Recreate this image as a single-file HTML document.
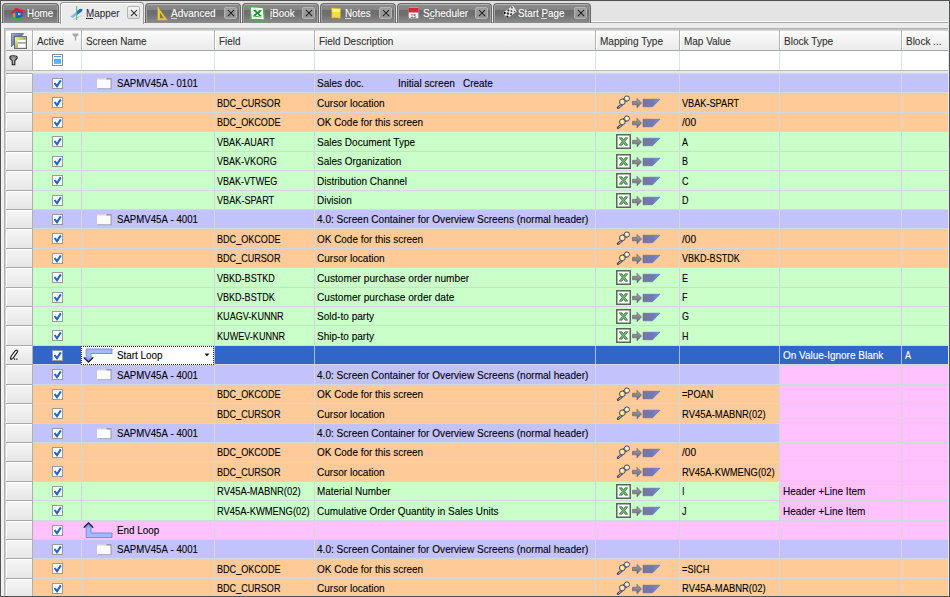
<!DOCTYPE html><html><head><meta charset="utf-8"><style>
*{margin:0;padding:0;box-sizing:border-box}
html,body{width:950px;height:597px;overflow:hidden}
body{position:relative;background:#e4e4e4;font-family:"Liberation Sans", sans-serif;font-size:10px}
.a{position:absolute}
.t{position:absolute;white-space:nowrap;transform-origin:0 0;line-height:12px;font-size:10px;-webkit-text-stroke:0.1px currentColor}
</style></head><body>
<div class="a" style="left:1px;top:1px;width:948px;height:1px;background:#e0e0e0"></div>
<div class="a" style="left:1px;top:21px;width:947px;height:1px;background:#f8f8f8"></div>
<div class="a" style="left:1px;top:22px;width:947px;height:1px;background:#a8a8a8"></div>
<div class="a" style="left:1px;top:23px;width:947px;height:573px;background:#ebebeb"></div>
<div class="a" style="left:1px;top:23px;width:3px;height:573px;background:#f0f0f0"></div>
<div class="a" style="left:2px;top:3px;width:57px;height:20px;background:linear-gradient(#b4b4b4 0,#b4b4b4 1px,#8c8c8c 1px,#838383 6px,#6c6c6c 6px,#707070 11px,#8c8c8c 19px);border:1px solid #6a6a6a;border-bottom:none;border-radius:4px 4px 0 0;box-shadow:inset 1px 0 0 #a0a0a0,inset -1px 0 0 #a0a0a0"></div>
<div class="a" style="left:60px;top:2px;width:84px;height:22px;background:#ebebeb;border:1px solid #9a9a9a;border-bottom:none;border-radius:3px 3px 0 0;box-shadow:inset 1px 1px 0 #fff"></div>
<div class="a" style="left:145px;top:3px;width:96px;height:20px;background:linear-gradient(#b4b4b4 0,#b4b4b4 1px,#8c8c8c 1px,#838383 6px,#6c6c6c 6px,#707070 11px,#8c8c8c 19px);border:1px solid #6a6a6a;border-bottom:none;border-radius:4px 4px 0 0;box-shadow:inset 1px 0 0 #a0a0a0,inset -1px 0 0 #a0a0a0"></div>
<div class="a" style="left:242px;top:3px;width:77px;height:20px;background:linear-gradient(#b4b4b4 0,#b4b4b4 1px,#8c8c8c 1px,#838383 6px,#6c6c6c 6px,#707070 11px,#8c8c8c 19px);border:1px solid #6a6a6a;border-bottom:none;border-radius:4px 4px 0 0;box-shadow:inset 1px 0 0 #a0a0a0,inset -1px 0 0 #a0a0a0"></div>
<div class="a" style="left:320px;top:3px;width:76px;height:20px;background:linear-gradient(#b4b4b4 0,#b4b4b4 1px,#8c8c8c 1px,#838383 6px,#6c6c6c 6px,#707070 11px,#8c8c8c 19px);border:1px solid #6a6a6a;border-bottom:none;border-radius:4px 4px 0 0;box-shadow:inset 1px 0 0 #a0a0a0,inset -1px 0 0 #a0a0a0"></div>
<div class="a" style="left:397px;top:3px;width:95px;height:20px;background:linear-gradient(#b4b4b4 0,#b4b4b4 1px,#8c8c8c 1px,#838383 6px,#6c6c6c 6px,#707070 11px,#8c8c8c 19px);border:1px solid #6a6a6a;border-bottom:none;border-radius:4px 4px 0 0;box-shadow:inset 1px 0 0 #a0a0a0,inset -1px 0 0 #a0a0a0"></div>
<div class="a" style="left:493px;top:3px;width:98px;height:20px;background:linear-gradient(#b4b4b4 0,#b4b4b4 1px,#8c8c8c 1px,#838383 6px,#6c6c6c 6px,#707070 11px,#8c8c8c 19px);border:1px solid #6a6a6a;border-bottom:none;border-radius:4px 4px 0 0;box-shadow:inset 1px 0 0 #a0a0a0,inset -1px 0 0 #a0a0a0"></div>
<svg class="a" style="left:10px;top:7px" width="14" height="12" viewBox="0 0 14 12"><path d="M1.5 6 L6.5 2.5 L12.5 5 L12 10.5 L6 11.5 L1.5 10 Z" fill="#2c6ee0"/><path d="M6.5 2.5 L12.5 5 L12 10.5 L6.5 11.3 Z" fill="#1e58c0"/><path d="M0.6 6.3 L6 0.8 L13.6 3.6 L12.6 6.2 L6.4 3.2 L1.8 7.3 Z" fill="#f01820"/><path d="M2.6 6.6 L5.2 6.2 L5.4 10.8 L2.8 10.6 Z" fill="#f08a20"/><path d="M8 6 L10.4 6.3 L10.3 8.3 L8 8 Z" fill="#a8d8ff"/><path d="M0.8 10 Q6 12.6 13.2 9.8 L13 11.2 Q6 12.8 1 11.2 Z" fill="#34b040"/></svg>
<div class="t " style="left:27px;top:7.4px;color:#fff;font-size:11px;transform:scaleX(0.8970);">Home</div>
<div class="a" style="left:33.4px;top:18px;width:5.6px;height:1px;background:#d8d8d8"></div>
<svg class="a" style="left:69px;top:5px" width="15" height="15" viewBox="0 0 15 15"><path d="M1.2 11.8 L8 6.5 L8 9.5 L4 12.8 Z" fill="#78b8ec"/><path d="M8 6 L11 3.8 L13.8 4.2 L12.5 6.8 L8 10 Z" fill="#1a70c8"/><path d="M4.5 14.5 L12.8 10.5" stroke="#c4c4c4" stroke-width="0.9"/><rect x="7.1" y="1" width="1.1" height="14" fill="#50c070"/></svg>
<div class="t " style="left:86px;top:7.4px;color:#303048;font-size:11px;transform:scaleX(0.8998);">Mapper</div>
<div class="a" style="left:86.0px;top:18px;width:7.4px;height:1px;background:#303048"></div>
<div class="a" style="left:127px;top:6px;width:13px;height:13px;border:1px solid #b4b4b4;border-radius:2px;background:linear-gradient(#f4f4f4,#dcdcdc)"></div>
<svg class="a" style="left:130px;top:9px" width="8" height="8"><path d="M1 1 L7 7 M7 1 L1 7" stroke="#111" stroke-width="1.05"/></svg>
<svg class="a" style="left:157px;top:6px" width="12" height="15" viewBox="0 0 12 15"><path d="M1 1 L1 14.2 L10.5 14.2 Z M3 6.8 L3 12.3 L6.9 12.3 Z" fill="#e8c428" fill-rule="evenodd"/><path d="M1 1 L1 14.2" stroke="#f8dc50" stroke-width="0.6"/></svg>
<div class="t " style="left:171px;top:7.4px;color:#fff;font-size:11px;transform:scaleX(0.9105);">Advanced</div>
<div class="a" style="left:171.0px;top:18px;width:5.9px;height:1px;background:#d8d8d8"></div>
<div class="a" style="left:224px;top:7px;width:13px;height:12px;border:1px solid #b4b4b4;border-radius:2px;background:linear-gradient(#a4a4a4,#8c8c8c);box-shadow:inset 0 0 0 1px #9c9c9c"></div>
<svg class="a" style="left:227px;top:9px" width="8" height="8"><path d="M1 1 L7 7 M7 1 L1 7" stroke="#111" stroke-width="1.05"/></svg>
<svg class="a" style="left:249px;top:5px" width="17" height="16" viewBox="0 0 17 16"><path d="M1 1.5 L14.5 2.5 L15.5 15 L2 14.5 Z" fill="#fff" stroke="#58a858" stroke-width="1.6"/><path d="M3.5 11 L12.5 12" stroke="#58a858" stroke-width="1"/><path d="M4 5 L7 5 L8.5 7 L10.5 5 L13 5.5 L10 8.5 L13 11 L10 11 L8.5 9 L6.5 11 L4 10.5 L7 8 Z" fill="#20902c"/></svg>
<div class="t " style="left:270px;top:7.4px;color:#fff;font-size:11px;transform:scaleX(0.8975);">iBook</div>
<div class="a" style="left:270.0px;top:18px;width:2.2px;height:1px;background:#d8d8d8"></div>
<div class="a" style="left:302px;top:7px;width:13px;height:12px;border:1px solid #b4b4b4;border-radius:2px;background:linear-gradient(#a4a4a4,#8c8c8c);box-shadow:inset 0 0 0 1px #9c9c9c"></div>
<svg class="a" style="left:305px;top:9px" width="8" height="8"><path d="M1 1 L7 7 M7 1 L1 7" stroke="#111" stroke-width="1.05"/></svg>
<svg class="a" style="left:330px;top:7px" width="12" height="13" viewBox="0 0 12 13"><path d="M1.5 1 L10.5 1.6 L10.2 11.2 Q6 10.2 1.8 11 Q2.2 6 1.5 1 Z" fill="#f4e038" stroke="#d8b020" stroke-width="0.7"/><path d="M2.3 1.8 L9.7 2.3 L9.6 5 Q6 3.8 2.4 5.2 Z" fill="#fff590"/></svg>
<div class="t " style="left:345px;top:7.4px;color:#fff;font-size:11px;transform:scaleX(0.8964);">Notes</div>
<div class="a" style="left:345.0px;top:18px;width:6.4px;height:1px;background:#d8d8d8"></div>
<div class="a" style="left:379px;top:7px;width:13px;height:12px;border:1px solid #b4b4b4;border-radius:2px;background:linear-gradient(#a4a4a4,#8c8c8c);box-shadow:inset 0 0 0 1px #9c9c9c"></div>
<svg class="a" style="left:382px;top:9px" width="8" height="8"><path d="M1 1 L7 7 M7 1 L1 7" stroke="#111" stroke-width="1.05"/></svg>
<svg class="a" style="left:408px;top:7px" width="11" height="12" viewBox="0 0 11 12"><rect x="0.5" y="0.5" width="10" height="11" fill="#f4f4f4" stroke="#909090" stroke-width="0.6"/><rect x="0.5" y="1" width="10" height="4.5" fill="#d8283a"/><text x="2.5" y="10.5" font-size="5" fill="#444" font-family="Liberation Sans">15</text></svg>
<div class="t " style="left:423px;top:7.4px;color:#fff;font-size:11px;transform:scaleX(0.9107);">Scheduler</div>
<div class="a" style="left:428.9px;top:18px;width:5.0px;height:1px;background:#d8d8d8"></div>
<div class="a" style="left:475px;top:7px;width:13px;height:12px;border:1px solid #b4b4b4;border-radius:2px;background:linear-gradient(#a4a4a4,#8c8c8c);box-shadow:inset 0 0 0 1px #9c9c9c"></div>
<svg class="a" style="left:478px;top:9px" width="8" height="8"><path d="M1 1 L7 7 M7 1 L1 7" stroke="#111" stroke-width="1.05"/></svg>
<svg class="a" style="left:501px;top:5px" width="17" height="16" viewBox="0 0 17 16"><path d="M6 15 L2.5 9" stroke="#909090" stroke-width="1"/><g transform="rotate(-35 9 7)"><rect x="3" y="3.5" width="12" height="7" fill="#e8e8e8"/><circle cx="4.2" cy="4.7" r="1.1" fill="#111"/><circle cx="8.6" cy="4.7" r="1" fill="#333"/><circle cx="13" cy="4.7" r="0.9" fill="#555"/><circle cx="6.4" cy="7" r="1.1" fill="#222"/><circle cx="10.8" cy="7" r="1" fill="#444"/><circle cx="4.2" cy="9.3" r="1.1" fill="#111"/><circle cx="8.6" cy="9.3" r="1" fill="#333"/><circle cx="13" cy="9.3" r="0.9" fill="#666"/></g></svg>
<div class="t " style="left:518px;top:7.4px;color:#fff;font-size:11px;transform:scaleX(0.8955);">Start&nbsp;Page</div>
<div class="a" style="left:541.2px;top:18px;width:5.9px;height:1px;background:#d8d8d8"></div>
<div class="a" style="left:574px;top:7px;width:13px;height:12px;border:1px solid #b4b4b4;border-radius:2px;background:linear-gradient(#a4a4a4,#8c8c8c);box-shadow:inset 0 0 0 1px #9c9c9c"></div>
<svg class="a" style="left:577px;top:9px" width="8" height="8"><path d="M1 1 L7 7 M7 1 L1 7" stroke="#111" stroke-width="1.05"/></svg>
<div class="a" style="left:4px;top:28px;width:945px;height:568px;background:#fff;border-top:1px solid #b0b0b0;border-left:1px solid #b0b0b0"></div>
<div class="a" style="left:5px;top:29px;width:944px;height:1px;background:#c6c6c6"></div>
<div class="a" style="left:5px;top:29px;width:1px;height:567px;background:#d0d0d0"></div>
<div class="a" style="left:6px;top:30px;width:942px;height:20px;background:linear-gradient(#d6d6d6 0,#d6d6d6 1px,#fefefe 1px,#f6f6f6 6px,#ebebeb 100%)"></div>
<div class="a" style="left:6px;top:50px;width:942px;height:1px;background:#a8a8a8"></div>
<div class="a" style="left:32px;top:30px;width:1px;height:20px;background:#b4b4b4"></div>
<div class="a" style="left:33px;top:31px;width:1px;height:19px;background:#fff"></div>
<div class="a" style="left:81px;top:30px;width:1px;height:20px;background:#b4b4b4"></div>
<div class="a" style="left:82px;top:31px;width:1px;height:19px;background:#fff"></div>
<div class="a" style="left:214px;top:30px;width:1px;height:20px;background:#b4b4b4"></div>
<div class="a" style="left:215px;top:31px;width:1px;height:19px;background:#fff"></div>
<div class="a" style="left:314px;top:30px;width:1px;height:20px;background:#b4b4b4"></div>
<div class="a" style="left:315px;top:31px;width:1px;height:19px;background:#fff"></div>
<div class="a" style="left:595px;top:30px;width:1px;height:20px;background:#b4b4b4"></div>
<div class="a" style="left:596px;top:31px;width:1px;height:19px;background:#fff"></div>
<div class="a" style="left:679px;top:30px;width:1px;height:20px;background:#b4b4b4"></div>
<div class="a" style="left:680px;top:31px;width:1px;height:19px;background:#fff"></div>
<div class="a" style="left:779px;top:30px;width:1px;height:20px;background:#b4b4b4"></div>
<div class="a" style="left:780px;top:31px;width:1px;height:19px;background:#fff"></div>
<div class="a" style="left:901px;top:30px;width:1px;height:20px;background:#b4b4b4"></div>
<div class="a" style="left:902px;top:31px;width:1px;height:19px;background:#fff"></div>
<svg class="a" style="left:11px;top:33px" width="16" height="16" viewBox="0 0 16 16"><defs><linearGradient id="cg1" x1="0" y1="0" x2="1" y2="1"><stop offset="0" stop-color="#98b0f8"/><stop offset="1" stop-color="#404880"/></linearGradient><linearGradient id="cg2" x1="0" y1="0" x2="1" y2="0"><stop offset="0" stop-color="#e8f078"/><stop offset="1" stop-color="#90a870"/></linearGradient><linearGradient id="cg3" x1="0" y1="0" x2="0" y2="1"><stop offset="0" stop-color="#e8f078"/><stop offset="1" stop-color="#90a868"/></linearGradient></defs><path d="M0.5 0.5 L12.8 0.5 L10.5 3 L3.2 3 L3.2 11 L0.5 13.8 Z" fill="url(#cg1)" stroke="#606078" stroke-width="0.7"/><rect x="3.6" y="3.6" width="11.8" height="11.8" fill="#fff" stroke="#6c6c6c" stroke-width="1.2"/><rect x="4.2" y="4.2" width="10.6" height="2.6" fill="url(#cg2)"/><rect x="4.2" y="6.8" width="2.6" height="8" fill="url(#cg3)"/><rect x="6.8" y="9.3" width="8" height="1.2" fill="#808080"/></svg>
<svg class="a" style="left:72px;top:33px" width="7" height="8" viewBox="0 0 7 8"><path d="M0.5 0.5 L6.5 0.5 L6.5 2 L4.2 4 L4.2 7.5 L2.8 7.5 L2.8 4 L0.5 2 Z" fill="#a8a8a8"/></svg>
<div class="t " style="left:37px;top:35.4px;color:#303030;font-size:11px;transform:scaleX(0.8999);">Active</div>
<div class="t " style="left:86px;top:35.4px;color:#303030;font-size:11px;transform:scaleX(0.9017);">Screen&nbsp;Name</div>
<div class="t " style="left:219px;top:35.4px;color:#303030;font-size:11px;transform:scaleX(0.8958);">Field</div>
<div class="t " style="left:319px;top:35.4px;color:#303030;font-size:11px;transform:scaleX(0.9072);">Field&nbsp;Description</div>
<div class="t " style="left:600px;top:35.4px;color:#303030;font-size:11px;transform:scaleX(0.9122);">Mapping&nbsp;Type</div>
<div class="t " style="left:684px;top:35.4px;color:#303030;font-size:11px;transform:scaleX(0.9061);">Map&nbsp;Value</div>
<div class="t " style="left:784px;top:35.4px;color:#303030;font-size:11px;transform:scaleX(0.9117);">Block&nbsp;Type</div>
<div class="t " style="left:906px;top:35.4px;color:#303030;font-size:11px;transform:scaleX(0.9055);">Block&nbsp;...</div>
<div class="a" style="left:6px;top:51px;width:26px;height:19px;background:linear-gradient(#f4f4f4,#e4e4e4)"></div>
<div class="a" style="left:6px;top:70px;width:942px;height:1px;background:#b8b8b8"></div>
<div class="a" style="left:6px;top:71px;width:942px;height:2px;background:#e8e8e8"></div>
<div class="a" style="left:6px;top:73px;width:942px;height:1px;background:#b0b0b0"></div>
<div class="a" style="left:32px;top:51px;width:1px;height:19px;background:#dde3ee"></div>
<div class="a" style="left:81px;top:51px;width:1px;height:19px;background:#dde3ee"></div>
<div class="a" style="left:214px;top:51px;width:1px;height:19px;background:#dde3ee"></div>
<div class="a" style="left:314px;top:51px;width:1px;height:19px;background:#dde3ee"></div>
<div class="a" style="left:595px;top:51px;width:1px;height:19px;background:#dde3ee"></div>
<div class="a" style="left:679px;top:51px;width:1px;height:19px;background:#dde3ee"></div>
<div class="a" style="left:779px;top:51px;width:1px;height:19px;background:#dde3ee"></div>
<div class="a" style="left:901px;top:51px;width:1px;height:19px;background:#dde3ee"></div>
<div class="a" style="left:32px;top:51px;width:1px;height:19px;background:#b0b0b0"></div>
<svg class="a" style="left:9px;top:55px" width="9" height="11" viewBox="0 0 9 11"><path d="M1 2 Q1 0.8 4.5 0.8 Q8 0.8 8 2 L8 3.5 L5.8 5.5 L5.8 9.8 L3.2 9.8 L3.2 5.5 L1 3.5 Z" fill="#b8b8b8" stroke="#202020" stroke-width="1.1"/><path d="M1.5 2.8 L7.5 2.8" stroke="#606060" stroke-width="0.8"/></svg>
<div class="a" style="left:52px;top:54px;width:11px;height:12px;border:1px solid #8c8c8c;background:linear-gradient(#3898f0,#70c0ff);box-shadow:inset 0 0 0 1px #fff"></div>
<div class="a" style="left:54px;top:57px;width:7px;height:2px;background:#e8f4ff"></div>
<div class="a" style="left:6px;top:74px;width:26px;height:18px;background:linear-gradient(#f6f6f6,#e6e6e6);box-shadow:inset 1px 1px 0 #fff"></div>
<div class="a" style="left:6px;top:73px;width:26px;height:1px;background:#a8a8a8"></div>
<div class="a" style="left:32px;top:73px;width:916px;height:19px;background:#c2c2fd"></div>
<div class="a" style="left:33px;top:73px;width:915px;height:1px;background:#d4d6e0"></div>
<div class="a" style="left:81px;top:74px;width:1px;height:18px;background:#d4d6e0"></div>
<div class="a" style="left:214px;top:74px;width:1px;height:18px;background:#d4d6e0"></div>
<div class="a" style="left:314px;top:74px;width:1px;height:18px;background:#d4d6e0"></div>
<div class="a" style="left:595px;top:74px;width:1px;height:18px;background:#d4d6e0"></div>
<div class="a" style="left:679px;top:74px;width:1px;height:18px;background:#d4d6e0"></div>
<div class="a" style="left:779px;top:74px;width:1px;height:18px;background:#d4d6e0"></div>
<div class="a" style="left:901px;top:74px;width:1px;height:18px;background:#d4d6e0"></div>
<div class="a" style="left:32px;top:73px;width:1px;height:19px;background:#b0b0b0"></div>
<div class="a" style="left:52px;top:78px;width:11px;height:11px;background:#fafafa;border:1px solid #9a9a9a"></div>
<svg class="a" style="left:53px;top:79px" width="9" height="9"><path d="M1.6 4 L4 7.2 L7.8 1.4" fill="none" stroke="#1e64c8" stroke-width="2"/></svg>
<svg class="a" style="left:97px;top:78px" width="16" height="12"><rect x="0" y="0" width="14" height="10.5" fill="#fbfbfb"/><rect x="0" y="0" width="14" height="1.5" fill="#d4d4e0"/><rect x="9.5" y="0" width="4.5" height="1.5" fill="#9898b0"/><rect x="13.5" y="0" width="1.2" height="11" fill="#a0a0b4"/><rect x="0.5" y="10.2" width="14.2" height="1" fill="#a8a8bc"/></svg>
<div class="t " style="left:117px;top:77.4px;color:#000;font-size:11px;transform:scaleX(0.8761);">SAPMV45A&nbsp;-&nbsp;0101</div>
<div class="t " style="left:317px;top:77.4px;color:#000;font-size:11px;transform:scaleX(0.9110);">Sales&nbsp;doc.</div>
<div class="t " style="left:398px;top:77.4px;color:#000;font-size:11px;transform:scaleX(0.9216);">Initial&nbsp;screen</div>
<div class="t " style="left:463px;top:77.4px;color:#000;font-size:11px;transform:scaleX(0.9004);">Create</div>
<div class="a" style="left:6px;top:93px;width:26px;height:19px;background:linear-gradient(#f6f6f6,#e6e6e6);box-shadow:inset 1px 1px 0 #fff"></div>
<div class="a" style="left:6px;top:92px;width:26px;height:1px;background:#a8a8a8"></div>
<div class="a" style="left:32px;top:92px;width:916px;height:20px;background:#fdca98"></div>
<div class="a" style="left:33px;top:92px;width:915px;height:1px;background:#d4d6e0"></div>
<div class="a" style="left:81px;top:93px;width:1px;height:19px;background:#d4d6e0"></div>
<div class="a" style="left:214px;top:93px;width:1px;height:19px;background:#d4d6e0"></div>
<div class="a" style="left:314px;top:93px;width:1px;height:19px;background:#d4d6e0"></div>
<div class="a" style="left:595px;top:93px;width:1px;height:19px;background:#d4d6e0"></div>
<div class="a" style="left:679px;top:93px;width:1px;height:19px;background:#d4d6e0"></div>
<div class="a" style="left:779px;top:93px;width:1px;height:19px;background:#d4d6e0"></div>
<div class="a" style="left:901px;top:93px;width:1px;height:19px;background:#d4d6e0"></div>
<div class="a" style="left:32px;top:92px;width:1px;height:20px;background:#b0b0b0"></div>
<div class="a" style="left:52px;top:97px;width:11px;height:11px;background:#fafafa;border:1px solid #9a9a9a"></div>
<svg class="a" style="left:53px;top:98px" width="9" height="9"><path d="M1.6 4 L4 7.2 L7.8 1.4" fill="none" stroke="#1e64c8" stroke-width="2"/></svg>
<div class="t " style="left:217px;top:96.82000000000001px;color:#000;font-size:11px;transform:scaleX(0.8241);">BDC_CURSOR</div>
<div class="t " style="left:317px;top:96.82000000000001px;color:#000;font-size:11px;transform:scaleX(0.9152);">Cursor&nbsp;location</div>
<div class="t " style="left:682px;top:96.82000000000001px;color:#000;font-size:11px;transform:scaleX(0.8333);">VBAK-SPART</div>
<svg class="a" style="left:616px;top:95px" width="15" height="15" viewBox="0 0 15 15"><path d="M6 9.5 L2 12.8" stroke="#404068" stroke-width="2.4" stroke-linecap="round"/><path d="M5.6 9.9 L2.4 12.5" stroke="#e8e0c8" stroke-width="0.8"/><path d="M6.3 6.8 L10.9 3.6" stroke="#404068" stroke-width="4.4" stroke-linecap="round"/><path d="M6.3 6.8 L10.9 3.6" stroke="#d8c070" stroke-width="2.6"/><circle cx="6.3" cy="6.9" r="2.9" fill="#f0e098" stroke="#404068" stroke-width="0.9"/><circle cx="10.9" cy="3.5" r="2.6" fill="#f2e6b0" stroke="#404068" stroke-width="0.9"/><circle cx="6" cy="6.6" r="1.1" fill="#fff8d8"/><circle cx="10.6" cy="3.2" r="1" fill="#fffae0"/></svg>
<svg class="a" style="left:632px;top:98px" width="30" height="11" viewBox="0 0 30 11"><defs><linearGradient id="pg" x1="0" y1="0" x2="1" y2="0"><stop offset="0" stop-color="#78789c"/><stop offset="0.55" stop-color="#7078b4"/><stop offset="1" stop-color="#6a96f0"/></linearGradient><linearGradient id="ag" x1="0" y1="0" x2="0" y2="1"><stop offset="0" stop-color="#a8a8a8"/><stop offset="1" stop-color="#686868"/></linearGradient></defs><path d="M0.5 3.3 L5 3.3 L5 0.3 L9.5 5 L5 9.8 L5 6.8 L0.5 6.8 Z" fill="url(#ag)" stroke="#5a5a80" stroke-width="0.6"/><path d="M11 1.2 L28 1.2 L20.5 8.8 L11 8.8 Z" fill="url(#pg)" stroke="#5858a0" stroke-width="0.5"/></svg>
<div class="a" style="left:6px;top:113px;width:26px;height:18px;background:linear-gradient(#f6f6f6,#e6e6e6);box-shadow:inset 1px 1px 0 #fff"></div>
<div class="a" style="left:6px;top:112px;width:26px;height:1px;background:#a8a8a8"></div>
<div class="a" style="left:32px;top:112px;width:916px;height:19px;background:#fdca98"></div>
<div class="a" style="left:33px;top:112px;width:915px;height:1px;background:#d4d6e0"></div>
<div class="a" style="left:81px;top:113px;width:1px;height:18px;background:#d4d6e0"></div>
<div class="a" style="left:214px;top:113px;width:1px;height:18px;background:#d4d6e0"></div>
<div class="a" style="left:314px;top:113px;width:1px;height:18px;background:#d4d6e0"></div>
<div class="a" style="left:595px;top:113px;width:1px;height:18px;background:#d4d6e0"></div>
<div class="a" style="left:679px;top:113px;width:1px;height:18px;background:#d4d6e0"></div>
<div class="a" style="left:779px;top:113px;width:1px;height:18px;background:#d4d6e0"></div>
<div class="a" style="left:901px;top:113px;width:1px;height:18px;background:#d4d6e0"></div>
<div class="a" style="left:32px;top:112px;width:1px;height:19px;background:#b0b0b0"></div>
<div class="a" style="left:52px;top:117px;width:11px;height:11px;background:#fafafa;border:1px solid #9a9a9a"></div>
<svg class="a" style="left:53px;top:118px" width="9" height="9"><path d="M1.6 4 L4 7.2 L7.8 1.4" fill="none" stroke="#1e64c8" stroke-width="2"/></svg>
<div class="t " style="left:217px;top:116.24000000000001px;color:#000;font-size:11px;transform:scaleX(0.8241);">BDC_OKCODE</div>
<div class="t " style="left:317px;top:116.24000000000001px;color:#000;font-size:11px;transform:scaleX(0.9043);">OK&nbsp;Code&nbsp;for&nbsp;this&nbsp;screen</div>
<div class="t " style="left:682px;top:116.24000000000001px;color:#000;font-size:11px;transform:scaleX(0.9245);">/00</div>
<svg class="a" style="left:616px;top:115px" width="15" height="15" viewBox="0 0 15 15"><path d="M6 9.5 L2 12.8" stroke="#404068" stroke-width="2.4" stroke-linecap="round"/><path d="M5.6 9.9 L2.4 12.5" stroke="#e8e0c8" stroke-width="0.8"/><path d="M6.3 6.8 L10.9 3.6" stroke="#404068" stroke-width="4.4" stroke-linecap="round"/><path d="M6.3 6.8 L10.9 3.6" stroke="#d8c070" stroke-width="2.6"/><circle cx="6.3" cy="6.9" r="2.9" fill="#f0e098" stroke="#404068" stroke-width="0.9"/><circle cx="10.9" cy="3.5" r="2.6" fill="#f2e6b0" stroke="#404068" stroke-width="0.9"/><circle cx="6" cy="6.6" r="1.1" fill="#fff8d8"/><circle cx="10.6" cy="3.2" r="1" fill="#fffae0"/></svg>
<svg class="a" style="left:632px;top:118px" width="30" height="11" viewBox="0 0 30 11"><defs><linearGradient id="pg" x1="0" y1="0" x2="1" y2="0"><stop offset="0" stop-color="#78789c"/><stop offset="0.55" stop-color="#7078b4"/><stop offset="1" stop-color="#6a96f0"/></linearGradient><linearGradient id="ag" x1="0" y1="0" x2="0" y2="1"><stop offset="0" stop-color="#a8a8a8"/><stop offset="1" stop-color="#686868"/></linearGradient></defs><path d="M0.5 3.3 L5 3.3 L5 0.3 L9.5 5 L5 9.8 L5 6.8 L0.5 6.8 Z" fill="url(#ag)" stroke="#5a5a80" stroke-width="0.6"/><path d="M11 1.2 L28 1.2 L20.5 8.8 L11 8.8 Z" fill="url(#pg)" stroke="#5858a0" stroke-width="0.5"/></svg>
<div class="a" style="left:6px;top:132px;width:26px;height:19px;background:linear-gradient(#f6f6f6,#e6e6e6);box-shadow:inset 1px 1px 0 #fff"></div>
<div class="a" style="left:6px;top:131px;width:26px;height:1px;background:#a8a8a8"></div>
<div class="a" style="left:32px;top:131px;width:916px;height:20px;background:#caffca"></div>
<div class="a" style="left:33px;top:131px;width:915px;height:1px;background:#d4d6e0"></div>
<div class="a" style="left:81px;top:132px;width:1px;height:19px;background:#d4d6e0"></div>
<div class="a" style="left:214px;top:132px;width:1px;height:19px;background:#d4d6e0"></div>
<div class="a" style="left:314px;top:132px;width:1px;height:19px;background:#d4d6e0"></div>
<div class="a" style="left:595px;top:132px;width:1px;height:19px;background:#d4d6e0"></div>
<div class="a" style="left:679px;top:132px;width:1px;height:19px;background:#d4d6e0"></div>
<div class="a" style="left:779px;top:132px;width:1px;height:19px;background:#d4d6e0"></div>
<div class="a" style="left:901px;top:132px;width:1px;height:19px;background:#d4d6e0"></div>
<div class="a" style="left:32px;top:131px;width:1px;height:20px;background:#b0b0b0"></div>
<div class="a" style="left:52px;top:136px;width:11px;height:11px;background:#fafafa;border:1px solid #9a9a9a"></div>
<svg class="a" style="left:53px;top:137px" width="9" height="9"><path d="M1.6 4 L4 7.2 L7.8 1.4" fill="none" stroke="#1e64c8" stroke-width="2"/></svg>
<div class="t " style="left:217px;top:135.66px;color:#000;font-size:11px;transform:scaleX(0.8235);">VBAK-AUART</div>
<div class="t " style="left:317px;top:135.66px;color:#000;font-size:11px;transform:scaleX(0.9112);">Sales&nbsp;Document&nbsp;Type</div>
<div class="t " style="left:682px;top:135.66px;color:#000;font-size:11px;transform:scaleX(0.8155);">A</div>
<svg class="a" style="left:616px;top:134px" width="15" height="15" viewBox="0 0 15 15"><rect x="0.75" y="0.75" width="13.5" height="13.5" fill="#f6fcf6" stroke="#5c665c" stroke-width="1.5"/><path d="M3.3 3.8 L6 3.8 L7.5 6.2 L9 3.8 L11.7 3.8 L8.9 7.5 L11.7 11.2 L9 11.2 L7.5 8.8 L6 11.2 L3.3 11.2 L6.1 7.5 Z" fill="#70b870" stroke="#3c683c" stroke-width="0.7"/></svg>
<svg class="a" style="left:632px;top:137px" width="30" height="11" viewBox="0 0 30 11"><defs><linearGradient id="pg" x1="0" y1="0" x2="1" y2="0"><stop offset="0" stop-color="#78789c"/><stop offset="0.55" stop-color="#7078b4"/><stop offset="1" stop-color="#6a96f0"/></linearGradient><linearGradient id="ag" x1="0" y1="0" x2="0" y2="1"><stop offset="0" stop-color="#a8a8a8"/><stop offset="1" stop-color="#686868"/></linearGradient></defs><path d="M0.5 3.3 L5 3.3 L5 0.3 L9.5 5 L5 9.8 L5 6.8 L0.5 6.8 Z" fill="url(#ag)" stroke="#5a5a80" stroke-width="0.6"/><path d="M11 1.2 L28 1.2 L20.5 8.8 L11 8.8 Z" fill="url(#pg)" stroke="#5858a0" stroke-width="0.5"/></svg>
<div class="a" style="left:6px;top:152px;width:26px;height:18px;background:linear-gradient(#f6f6f6,#e6e6e6);box-shadow:inset 1px 1px 0 #fff"></div>
<div class="a" style="left:6px;top:151px;width:26px;height:1px;background:#a8a8a8"></div>
<div class="a" style="left:32px;top:151px;width:916px;height:19px;background:#caffca"></div>
<div class="a" style="left:33px;top:151px;width:915px;height:1px;background:#d4d6e0"></div>
<div class="a" style="left:81px;top:152px;width:1px;height:18px;background:#d4d6e0"></div>
<div class="a" style="left:214px;top:152px;width:1px;height:18px;background:#d4d6e0"></div>
<div class="a" style="left:314px;top:152px;width:1px;height:18px;background:#d4d6e0"></div>
<div class="a" style="left:595px;top:152px;width:1px;height:18px;background:#d4d6e0"></div>
<div class="a" style="left:679px;top:152px;width:1px;height:18px;background:#d4d6e0"></div>
<div class="a" style="left:779px;top:152px;width:1px;height:18px;background:#d4d6e0"></div>
<div class="a" style="left:901px;top:152px;width:1px;height:18px;background:#d4d6e0"></div>
<div class="a" style="left:32px;top:151px;width:1px;height:19px;background:#b0b0b0"></div>
<div class="a" style="left:52px;top:156px;width:11px;height:11px;background:#fafafa;border:1px solid #9a9a9a"></div>
<svg class="a" style="left:53px;top:157px" width="9" height="9"><path d="M1.6 4 L4 7.2 L7.8 1.4" fill="none" stroke="#1e64c8" stroke-width="2"/></svg>
<div class="t " style="left:217px;top:155.08px;color:#000;font-size:11px;transform:scaleX(0.8209);">VBAK-VKORG</div>
<div class="t " style="left:317px;top:155.08px;color:#000;font-size:11px;transform:scaleX(0.9081);">Sales&nbsp;Organization</div>
<div class="t " style="left:682px;top:155.08px;color:#000;font-size:11px;transform:scaleX(0.8155);">B</div>
<svg class="a" style="left:616px;top:154px" width="15" height="15" viewBox="0 0 15 15"><rect x="0.75" y="0.75" width="13.5" height="13.5" fill="#f6fcf6" stroke="#5c665c" stroke-width="1.5"/><path d="M3.3 3.8 L6 3.8 L7.5 6.2 L9 3.8 L11.7 3.8 L8.9 7.5 L11.7 11.2 L9 11.2 L7.5 8.8 L6 11.2 L3.3 11.2 L6.1 7.5 Z" fill="#70b870" stroke="#3c683c" stroke-width="0.7"/></svg>
<svg class="a" style="left:632px;top:157px" width="30" height="11" viewBox="0 0 30 11"><defs><linearGradient id="pg" x1="0" y1="0" x2="1" y2="0"><stop offset="0" stop-color="#78789c"/><stop offset="0.55" stop-color="#7078b4"/><stop offset="1" stop-color="#6a96f0"/></linearGradient><linearGradient id="ag" x1="0" y1="0" x2="0" y2="1"><stop offset="0" stop-color="#a8a8a8"/><stop offset="1" stop-color="#686868"/></linearGradient></defs><path d="M0.5 3.3 L5 3.3 L5 0.3 L9.5 5 L5 9.8 L5 6.8 L0.5 6.8 Z" fill="url(#ag)" stroke="#5a5a80" stroke-width="0.6"/><path d="M11 1.2 L28 1.2 L20.5 8.8 L11 8.8 Z" fill="url(#pg)" stroke="#5858a0" stroke-width="0.5"/></svg>
<div class="a" style="left:6px;top:171px;width:26px;height:19px;background:linear-gradient(#f6f6f6,#e6e6e6);box-shadow:inset 1px 1px 0 #fff"></div>
<div class="a" style="left:6px;top:170px;width:26px;height:1px;background:#a8a8a8"></div>
<div class="a" style="left:32px;top:170px;width:916px;height:20px;background:#caffca"></div>
<div class="a" style="left:33px;top:170px;width:915px;height:1px;background:#d4d6e0"></div>
<div class="a" style="left:81px;top:171px;width:1px;height:19px;background:#d4d6e0"></div>
<div class="a" style="left:214px;top:171px;width:1px;height:19px;background:#d4d6e0"></div>
<div class="a" style="left:314px;top:171px;width:1px;height:19px;background:#d4d6e0"></div>
<div class="a" style="left:595px;top:171px;width:1px;height:19px;background:#d4d6e0"></div>
<div class="a" style="left:679px;top:171px;width:1px;height:19px;background:#d4d6e0"></div>
<div class="a" style="left:779px;top:171px;width:1px;height:19px;background:#d4d6e0"></div>
<div class="a" style="left:901px;top:171px;width:1px;height:19px;background:#d4d6e0"></div>
<div class="a" style="left:32px;top:170px;width:1px;height:20px;background:#b0b0b0"></div>
<div class="a" style="left:52px;top:175px;width:11px;height:11px;background:#fafafa;border:1px solid #9a9a9a"></div>
<svg class="a" style="left:53px;top:176px" width="9" height="9"><path d="M1.6 4 L4 7.2 L7.8 1.4" fill="none" stroke="#1e64c8" stroke-width="2"/></svg>
<div class="t " style="left:217px;top:174.5px;color:#000;font-size:11px;transform:scaleX(0.8209);">VBAK-VTWEG</div>
<div class="t " style="left:317px;top:174.5px;color:#000;font-size:11px;transform:scaleX(0.9093);">Distribution&nbsp;Channel</div>
<div class="t " style="left:682px;top:174.5px;color:#000;font-size:11px;transform:scaleX(0.8155);">C</div>
<svg class="a" style="left:616px;top:173px" width="15" height="15" viewBox="0 0 15 15"><rect x="0.75" y="0.75" width="13.5" height="13.5" fill="#f6fcf6" stroke="#5c665c" stroke-width="1.5"/><path d="M3.3 3.8 L6 3.8 L7.5 6.2 L9 3.8 L11.7 3.8 L8.9 7.5 L11.7 11.2 L9 11.2 L7.5 8.8 L6 11.2 L3.3 11.2 L6.1 7.5 Z" fill="#70b870" stroke="#3c683c" stroke-width="0.7"/></svg>
<svg class="a" style="left:632px;top:176px" width="30" height="11" viewBox="0 0 30 11"><defs><linearGradient id="pg" x1="0" y1="0" x2="1" y2="0"><stop offset="0" stop-color="#78789c"/><stop offset="0.55" stop-color="#7078b4"/><stop offset="1" stop-color="#6a96f0"/></linearGradient><linearGradient id="ag" x1="0" y1="0" x2="0" y2="1"><stop offset="0" stop-color="#a8a8a8"/><stop offset="1" stop-color="#686868"/></linearGradient></defs><path d="M0.5 3.3 L5 3.3 L5 0.3 L9.5 5 L5 9.8 L5 6.8 L0.5 6.8 Z" fill="url(#ag)" stroke="#5a5a80" stroke-width="0.6"/><path d="M11 1.2 L28 1.2 L20.5 8.8 L11 8.8 Z" fill="url(#pg)" stroke="#5858a0" stroke-width="0.5"/></svg>
<div class="a" style="left:6px;top:191px;width:26px;height:18px;background:linear-gradient(#f6f6f6,#e6e6e6);box-shadow:inset 1px 1px 0 #fff"></div>
<div class="a" style="left:6px;top:190px;width:26px;height:1px;background:#a8a8a8"></div>
<div class="a" style="left:32px;top:190px;width:916px;height:19px;background:#caffca"></div>
<div class="a" style="left:33px;top:190px;width:915px;height:1px;background:#d4d6e0"></div>
<div class="a" style="left:81px;top:191px;width:1px;height:18px;background:#d4d6e0"></div>
<div class="a" style="left:214px;top:191px;width:1px;height:18px;background:#d4d6e0"></div>
<div class="a" style="left:314px;top:191px;width:1px;height:18px;background:#d4d6e0"></div>
<div class="a" style="left:595px;top:191px;width:1px;height:18px;background:#d4d6e0"></div>
<div class="a" style="left:679px;top:191px;width:1px;height:18px;background:#d4d6e0"></div>
<div class="a" style="left:779px;top:191px;width:1px;height:18px;background:#d4d6e0"></div>
<div class="a" style="left:901px;top:191px;width:1px;height:18px;background:#d4d6e0"></div>
<div class="a" style="left:32px;top:190px;width:1px;height:19px;background:#b0b0b0"></div>
<div class="a" style="left:52px;top:195px;width:11px;height:11px;background:#fafafa;border:1px solid #9a9a9a"></div>
<svg class="a" style="left:53px;top:196px" width="9" height="9"><path d="M1.6 4 L4 7.2 L7.8 1.4" fill="none" stroke="#1e64c8" stroke-width="2"/></svg>
<div class="t " style="left:217px;top:193.92000000000002px;color:#000;font-size:11px;transform:scaleX(0.8333);">VBAK-SPART</div>
<div class="t " style="left:317px;top:193.92000000000002px;color:#000;font-size:11px;transform:scaleX(0.9042);">Division</div>
<div class="t " style="left:682px;top:193.92000000000002px;color:#000;font-size:11px;transform:scaleX(0.8155);">D</div>
<svg class="a" style="left:616px;top:193px" width="15" height="15" viewBox="0 0 15 15"><rect x="0.75" y="0.75" width="13.5" height="13.5" fill="#f6fcf6" stroke="#5c665c" stroke-width="1.5"/><path d="M3.3 3.8 L6 3.8 L7.5 6.2 L9 3.8 L11.7 3.8 L8.9 7.5 L11.7 11.2 L9 11.2 L7.5 8.8 L6 11.2 L3.3 11.2 L6.1 7.5 Z" fill="#70b870" stroke="#3c683c" stroke-width="0.7"/></svg>
<svg class="a" style="left:632px;top:196px" width="30" height="11" viewBox="0 0 30 11"><defs><linearGradient id="pg" x1="0" y1="0" x2="1" y2="0"><stop offset="0" stop-color="#78789c"/><stop offset="0.55" stop-color="#7078b4"/><stop offset="1" stop-color="#6a96f0"/></linearGradient><linearGradient id="ag" x1="0" y1="0" x2="0" y2="1"><stop offset="0" stop-color="#a8a8a8"/><stop offset="1" stop-color="#686868"/></linearGradient></defs><path d="M0.5 3.3 L5 3.3 L5 0.3 L9.5 5 L5 9.8 L5 6.8 L0.5 6.8 Z" fill="url(#ag)" stroke="#5a5a80" stroke-width="0.6"/><path d="M11 1.2 L28 1.2 L20.5 8.8 L11 8.8 Z" fill="url(#pg)" stroke="#5858a0" stroke-width="0.5"/></svg>
<div class="a" style="left:6px;top:210px;width:26px;height:18px;background:linear-gradient(#f6f6f6,#e6e6e6);box-shadow:inset 1px 1px 0 #fff"></div>
<div class="a" style="left:6px;top:209px;width:26px;height:1px;background:#a8a8a8"></div>
<div class="a" style="left:32px;top:209px;width:916px;height:19px;background:#c2c2fd"></div>
<div class="a" style="left:33px;top:209px;width:915px;height:1px;background:#d4d6e0"></div>
<div class="a" style="left:81px;top:210px;width:1px;height:18px;background:#d4d6e0"></div>
<div class="a" style="left:214px;top:210px;width:1px;height:18px;background:#d4d6e0"></div>
<div class="a" style="left:314px;top:210px;width:1px;height:18px;background:#d4d6e0"></div>
<div class="a" style="left:595px;top:210px;width:1px;height:18px;background:#d4d6e0"></div>
<div class="a" style="left:679px;top:210px;width:1px;height:18px;background:#d4d6e0"></div>
<div class="a" style="left:779px;top:210px;width:1px;height:18px;background:#d4d6e0"></div>
<div class="a" style="left:901px;top:210px;width:1px;height:18px;background:#d4d6e0"></div>
<div class="a" style="left:32px;top:209px;width:1px;height:19px;background:#b0b0b0"></div>
<div class="a" style="left:52px;top:214px;width:11px;height:11px;background:#fafafa;border:1px solid #9a9a9a"></div>
<svg class="a" style="left:53px;top:215px" width="9" height="9"><path d="M1.6 4 L4 7.2 L7.8 1.4" fill="none" stroke="#1e64c8" stroke-width="2"/></svg>
<svg class="a" style="left:97px;top:214px" width="16" height="12"><rect x="0" y="0" width="14" height="10.5" fill="#fbfbfb"/><rect x="0" y="0" width="14" height="1.5" fill="#d4d4e0"/><rect x="9.5" y="0" width="4.5" height="1.5" fill="#9898b0"/><rect x="13.5" y="0" width="1.2" height="11" fill="#a0a0b4"/><rect x="0.5" y="10.2" width="14.2" height="1" fill="#a8a8bc"/></svg>
<div class="t " style="left:117px;top:213.34px;color:#000;font-size:11px;transform:scaleX(0.8761);">SAPMV45A&nbsp;-&nbsp;4001</div>
<div class="t " style="left:317px;top:213.34px;color:#000;font-size:11px;transform:scaleX(0.9151);">4.0:&nbsp;Screen&nbsp;Container&nbsp;for&nbsp;Overview&nbsp;Screens&nbsp;(normal&nbsp;header)</div>
<div class="a" style="left:6px;top:229px;width:26px;height:19px;background:linear-gradient(#f6f6f6,#e6e6e6);box-shadow:inset 1px 1px 0 #fff"></div>
<div class="a" style="left:6px;top:228px;width:26px;height:1px;background:#a8a8a8"></div>
<div class="a" style="left:32px;top:228px;width:916px;height:20px;background:#fdca98"></div>
<div class="a" style="left:33px;top:228px;width:915px;height:1px;background:#d4d6e0"></div>
<div class="a" style="left:81px;top:229px;width:1px;height:19px;background:#d4d6e0"></div>
<div class="a" style="left:214px;top:229px;width:1px;height:19px;background:#d4d6e0"></div>
<div class="a" style="left:314px;top:229px;width:1px;height:19px;background:#d4d6e0"></div>
<div class="a" style="left:595px;top:229px;width:1px;height:19px;background:#d4d6e0"></div>
<div class="a" style="left:679px;top:229px;width:1px;height:19px;background:#d4d6e0"></div>
<div class="a" style="left:779px;top:229px;width:1px;height:19px;background:#d4d6e0"></div>
<div class="a" style="left:901px;top:229px;width:1px;height:19px;background:#d4d6e0"></div>
<div class="a" style="left:32px;top:228px;width:1px;height:20px;background:#b0b0b0"></div>
<div class="a" style="left:52px;top:233px;width:11px;height:11px;background:#fafafa;border:1px solid #9a9a9a"></div>
<svg class="a" style="left:53px;top:234px" width="9" height="9"><path d="M1.6 4 L4 7.2 L7.8 1.4" fill="none" stroke="#1e64c8" stroke-width="2"/></svg>
<div class="t " style="left:217px;top:232.76000000000002px;color:#000;font-size:11px;transform:scaleX(0.8241);">BDC_OKCODE</div>
<div class="t " style="left:317px;top:232.76000000000002px;color:#000;font-size:11px;transform:scaleX(0.9043);">OK&nbsp;Code&nbsp;for&nbsp;this&nbsp;screen</div>
<div class="t " style="left:682px;top:232.76000000000002px;color:#000;font-size:11px;transform:scaleX(0.9245);">/00</div>
<svg class="a" style="left:616px;top:231px" width="15" height="15" viewBox="0 0 15 15"><path d="M6 9.5 L2 12.8" stroke="#404068" stroke-width="2.4" stroke-linecap="round"/><path d="M5.6 9.9 L2.4 12.5" stroke="#e8e0c8" stroke-width="0.8"/><path d="M6.3 6.8 L10.9 3.6" stroke="#404068" stroke-width="4.4" stroke-linecap="round"/><path d="M6.3 6.8 L10.9 3.6" stroke="#d8c070" stroke-width="2.6"/><circle cx="6.3" cy="6.9" r="2.9" fill="#f0e098" stroke="#404068" stroke-width="0.9"/><circle cx="10.9" cy="3.5" r="2.6" fill="#f2e6b0" stroke="#404068" stroke-width="0.9"/><circle cx="6" cy="6.6" r="1.1" fill="#fff8d8"/><circle cx="10.6" cy="3.2" r="1" fill="#fffae0"/></svg>
<svg class="a" style="left:632px;top:234px" width="30" height="11" viewBox="0 0 30 11"><defs><linearGradient id="pg" x1="0" y1="0" x2="1" y2="0"><stop offset="0" stop-color="#78789c"/><stop offset="0.55" stop-color="#7078b4"/><stop offset="1" stop-color="#6a96f0"/></linearGradient><linearGradient id="ag" x1="0" y1="0" x2="0" y2="1"><stop offset="0" stop-color="#a8a8a8"/><stop offset="1" stop-color="#686868"/></linearGradient></defs><path d="M0.5 3.3 L5 3.3 L5 0.3 L9.5 5 L5 9.8 L5 6.8 L0.5 6.8 Z" fill="url(#ag)" stroke="#5a5a80" stroke-width="0.6"/><path d="M11 1.2 L28 1.2 L20.5 8.8 L11 8.8 Z" fill="url(#pg)" stroke="#5858a0" stroke-width="0.5"/></svg>
<div class="a" style="left:6px;top:249px;width:26px;height:18px;background:linear-gradient(#f6f6f6,#e6e6e6);box-shadow:inset 1px 1px 0 #fff"></div>
<div class="a" style="left:6px;top:248px;width:26px;height:1px;background:#a8a8a8"></div>
<div class="a" style="left:32px;top:248px;width:916px;height:19px;background:#fdca98"></div>
<div class="a" style="left:33px;top:248px;width:915px;height:1px;background:#d4d6e0"></div>
<div class="a" style="left:81px;top:249px;width:1px;height:18px;background:#d4d6e0"></div>
<div class="a" style="left:214px;top:249px;width:1px;height:18px;background:#d4d6e0"></div>
<div class="a" style="left:314px;top:249px;width:1px;height:18px;background:#d4d6e0"></div>
<div class="a" style="left:595px;top:249px;width:1px;height:18px;background:#d4d6e0"></div>
<div class="a" style="left:679px;top:249px;width:1px;height:18px;background:#d4d6e0"></div>
<div class="a" style="left:779px;top:249px;width:1px;height:18px;background:#d4d6e0"></div>
<div class="a" style="left:901px;top:249px;width:1px;height:18px;background:#d4d6e0"></div>
<div class="a" style="left:32px;top:248px;width:1px;height:19px;background:#b0b0b0"></div>
<div class="a" style="left:52px;top:253px;width:11px;height:11px;background:#fafafa;border:1px solid #9a9a9a"></div>
<svg class="a" style="left:53px;top:254px" width="9" height="9"><path d="M1.6 4 L4 7.2 L7.8 1.4" fill="none" stroke="#1e64c8" stroke-width="2"/></svg>
<div class="t " style="left:217px;top:252.18px;color:#000;font-size:11px;transform:scaleX(0.8241);">BDC_CURSOR</div>
<div class="t " style="left:317px;top:252.18px;color:#000;font-size:11px;transform:scaleX(0.9152);">Cursor&nbsp;location</div>
<div class="t " style="left:682px;top:252.18px;color:#000;font-size:11px;transform:scaleX(0.8211);">VBKD-BSTDK</div>
<svg class="a" style="left:616px;top:251px" width="15" height="15" viewBox="0 0 15 15"><path d="M6 9.5 L2 12.8" stroke="#404068" stroke-width="2.4" stroke-linecap="round"/><path d="M5.6 9.9 L2.4 12.5" stroke="#e8e0c8" stroke-width="0.8"/><path d="M6.3 6.8 L10.9 3.6" stroke="#404068" stroke-width="4.4" stroke-linecap="round"/><path d="M6.3 6.8 L10.9 3.6" stroke="#d8c070" stroke-width="2.6"/><circle cx="6.3" cy="6.9" r="2.9" fill="#f0e098" stroke="#404068" stroke-width="0.9"/><circle cx="10.9" cy="3.5" r="2.6" fill="#f2e6b0" stroke="#404068" stroke-width="0.9"/><circle cx="6" cy="6.6" r="1.1" fill="#fff8d8"/><circle cx="10.6" cy="3.2" r="1" fill="#fffae0"/></svg>
<svg class="a" style="left:632px;top:254px" width="30" height="11" viewBox="0 0 30 11"><defs><linearGradient id="pg" x1="0" y1="0" x2="1" y2="0"><stop offset="0" stop-color="#78789c"/><stop offset="0.55" stop-color="#7078b4"/><stop offset="1" stop-color="#6a96f0"/></linearGradient><linearGradient id="ag" x1="0" y1="0" x2="0" y2="1"><stop offset="0" stop-color="#a8a8a8"/><stop offset="1" stop-color="#686868"/></linearGradient></defs><path d="M0.5 3.3 L5 3.3 L5 0.3 L9.5 5 L5 9.8 L5 6.8 L0.5 6.8 Z" fill="url(#ag)" stroke="#5a5a80" stroke-width="0.6"/><path d="M11 1.2 L28 1.2 L20.5 8.8 L11 8.8 Z" fill="url(#pg)" stroke="#5858a0" stroke-width="0.5"/></svg>
<div class="a" style="left:6px;top:268px;width:26px;height:19px;background:linear-gradient(#f6f6f6,#e6e6e6);box-shadow:inset 1px 1px 0 #fff"></div>
<div class="a" style="left:6px;top:267px;width:26px;height:1px;background:#a8a8a8"></div>
<div class="a" style="left:32px;top:267px;width:916px;height:20px;background:#caffca"></div>
<div class="a" style="left:33px;top:267px;width:915px;height:1px;background:#d4d6e0"></div>
<div class="a" style="left:81px;top:268px;width:1px;height:19px;background:#d4d6e0"></div>
<div class="a" style="left:214px;top:268px;width:1px;height:19px;background:#d4d6e0"></div>
<div class="a" style="left:314px;top:268px;width:1px;height:19px;background:#d4d6e0"></div>
<div class="a" style="left:595px;top:268px;width:1px;height:19px;background:#d4d6e0"></div>
<div class="a" style="left:679px;top:268px;width:1px;height:19px;background:#d4d6e0"></div>
<div class="a" style="left:779px;top:268px;width:1px;height:19px;background:#d4d6e0"></div>
<div class="a" style="left:901px;top:268px;width:1px;height:19px;background:#d4d6e0"></div>
<div class="a" style="left:32px;top:267px;width:1px;height:20px;background:#b0b0b0"></div>
<div class="a" style="left:52px;top:272px;width:11px;height:11px;background:#fafafa;border:1px solid #9a9a9a"></div>
<svg class="a" style="left:53px;top:273px" width="9" height="9"><path d="M1.6 4 L4 7.2 L7.8 1.4" fill="none" stroke="#1e64c8" stroke-width="2"/></svg>
<div class="t " style="left:217px;top:271.59999999999997px;color:#000;font-size:11px;transform:scaleX(0.8211);">VBKD-BSTKD</div>
<div class="t " style="left:317px;top:271.59999999999997px;color:#000;font-size:11px;transform:scaleX(0.9217);">Customer&nbsp;purchase&nbsp;order&nbsp;number</div>
<div class="t " style="left:682px;top:271.59999999999997px;color:#000;font-size:11px;transform:scaleX(0.8155);">E</div>
<svg class="a" style="left:616px;top:270px" width="15" height="15" viewBox="0 0 15 15"><rect x="0.75" y="0.75" width="13.5" height="13.5" fill="#f6fcf6" stroke="#5c665c" stroke-width="1.5"/><path d="M3.3 3.8 L6 3.8 L7.5 6.2 L9 3.8 L11.7 3.8 L8.9 7.5 L11.7 11.2 L9 11.2 L7.5 8.8 L6 11.2 L3.3 11.2 L6.1 7.5 Z" fill="#70b870" stroke="#3c683c" stroke-width="0.7"/></svg>
<svg class="a" style="left:632px;top:273px" width="30" height="11" viewBox="0 0 30 11"><defs><linearGradient id="pg" x1="0" y1="0" x2="1" y2="0"><stop offset="0" stop-color="#78789c"/><stop offset="0.55" stop-color="#7078b4"/><stop offset="1" stop-color="#6a96f0"/></linearGradient><linearGradient id="ag" x1="0" y1="0" x2="0" y2="1"><stop offset="0" stop-color="#a8a8a8"/><stop offset="1" stop-color="#686868"/></linearGradient></defs><path d="M0.5 3.3 L5 3.3 L5 0.3 L9.5 5 L5 9.8 L5 6.8 L0.5 6.8 Z" fill="url(#ag)" stroke="#5a5a80" stroke-width="0.6"/><path d="M11 1.2 L28 1.2 L20.5 8.8 L11 8.8 Z" fill="url(#pg)" stroke="#5858a0" stroke-width="0.5"/></svg>
<div class="a" style="left:6px;top:288px;width:26px;height:18px;background:linear-gradient(#f6f6f6,#e6e6e6);box-shadow:inset 1px 1px 0 #fff"></div>
<div class="a" style="left:6px;top:287px;width:26px;height:1px;background:#a8a8a8"></div>
<div class="a" style="left:32px;top:287px;width:916px;height:19px;background:#caffca"></div>
<div class="a" style="left:33px;top:287px;width:915px;height:1px;background:#d4d6e0"></div>
<div class="a" style="left:81px;top:288px;width:1px;height:18px;background:#d4d6e0"></div>
<div class="a" style="left:214px;top:288px;width:1px;height:18px;background:#d4d6e0"></div>
<div class="a" style="left:314px;top:288px;width:1px;height:18px;background:#d4d6e0"></div>
<div class="a" style="left:595px;top:288px;width:1px;height:18px;background:#d4d6e0"></div>
<div class="a" style="left:679px;top:288px;width:1px;height:18px;background:#d4d6e0"></div>
<div class="a" style="left:779px;top:288px;width:1px;height:18px;background:#d4d6e0"></div>
<div class="a" style="left:901px;top:288px;width:1px;height:18px;background:#d4d6e0"></div>
<div class="a" style="left:32px;top:287px;width:1px;height:19px;background:#b0b0b0"></div>
<div class="a" style="left:52px;top:292px;width:11px;height:11px;background:#fafafa;border:1px solid #9a9a9a"></div>
<svg class="a" style="left:53px;top:293px" width="9" height="9"><path d="M1.6 4 L4 7.2 L7.8 1.4" fill="none" stroke="#1e64c8" stroke-width="2"/></svg>
<div class="t " style="left:217px;top:291.02px;color:#000;font-size:11px;transform:scaleX(0.8211);">VBKD-BSTDK</div>
<div class="t " style="left:317px;top:291.02px;color:#000;font-size:11px;transform:scaleX(0.9212);">Customer&nbsp;purchase&nbsp;order&nbsp;date</div>
<div class="t " style="left:682px;top:291.02px;color:#000;font-size:11px;transform:scaleX(0.8155);">F</div>
<svg class="a" style="left:616px;top:290px" width="15" height="15" viewBox="0 0 15 15"><rect x="0.75" y="0.75" width="13.5" height="13.5" fill="#f6fcf6" stroke="#5c665c" stroke-width="1.5"/><path d="M3.3 3.8 L6 3.8 L7.5 6.2 L9 3.8 L11.7 3.8 L8.9 7.5 L11.7 11.2 L9 11.2 L7.5 8.8 L6 11.2 L3.3 11.2 L6.1 7.5 Z" fill="#70b870" stroke="#3c683c" stroke-width="0.7"/></svg>
<svg class="a" style="left:632px;top:293px" width="30" height="11" viewBox="0 0 30 11"><defs><linearGradient id="pg" x1="0" y1="0" x2="1" y2="0"><stop offset="0" stop-color="#78789c"/><stop offset="0.55" stop-color="#7078b4"/><stop offset="1" stop-color="#6a96f0"/></linearGradient><linearGradient id="ag" x1="0" y1="0" x2="0" y2="1"><stop offset="0" stop-color="#a8a8a8"/><stop offset="1" stop-color="#686868"/></linearGradient></defs><path d="M0.5 3.3 L5 3.3 L5 0.3 L9.5 5 L5 9.8 L5 6.8 L0.5 6.8 Z" fill="url(#ag)" stroke="#5a5a80" stroke-width="0.6"/><path d="M11 1.2 L28 1.2 L20.5 8.8 L11 8.8 Z" fill="url(#pg)" stroke="#5858a0" stroke-width="0.5"/></svg>
<div class="a" style="left:6px;top:307px;width:26px;height:18px;background:linear-gradient(#f6f6f6,#e6e6e6);box-shadow:inset 1px 1px 0 #fff"></div>
<div class="a" style="left:6px;top:306px;width:26px;height:1px;background:#a8a8a8"></div>
<div class="a" style="left:32px;top:306px;width:916px;height:19px;background:#caffca"></div>
<div class="a" style="left:33px;top:306px;width:915px;height:1px;background:#d4d6e0"></div>
<div class="a" style="left:81px;top:307px;width:1px;height:18px;background:#d4d6e0"></div>
<div class="a" style="left:214px;top:307px;width:1px;height:18px;background:#d4d6e0"></div>
<div class="a" style="left:314px;top:307px;width:1px;height:18px;background:#d4d6e0"></div>
<div class="a" style="left:595px;top:307px;width:1px;height:18px;background:#d4d6e0"></div>
<div class="a" style="left:679px;top:307px;width:1px;height:18px;background:#d4d6e0"></div>
<div class="a" style="left:779px;top:307px;width:1px;height:18px;background:#d4d6e0"></div>
<div class="a" style="left:901px;top:307px;width:1px;height:18px;background:#d4d6e0"></div>
<div class="a" style="left:32px;top:306px;width:1px;height:19px;background:#b0b0b0"></div>
<div class="a" style="left:52px;top:311px;width:11px;height:11px;background:#fafafa;border:1px solid #9a9a9a"></div>
<svg class="a" style="left:53px;top:312px" width="9" height="9"><path d="M1.6 4 L4 7.2 L7.8 1.4" fill="none" stroke="#1e64c8" stroke-width="2"/></svg>
<div class="t " style="left:217px;top:310.44px;color:#000;font-size:11px;transform:scaleX(0.8265);">KUAGV-KUNNR</div>
<div class="t " style="left:317px;top:310.44px;color:#000;font-size:11px;transform:scaleX(0.9138);">Sold-to&nbsp;party</div>
<div class="t " style="left:682px;top:310.44px;color:#000;font-size:11px;transform:scaleX(0.8155);">G</div>
<svg class="a" style="left:616px;top:309px" width="15" height="15" viewBox="0 0 15 15"><rect x="0.75" y="0.75" width="13.5" height="13.5" fill="#f6fcf6" stroke="#5c665c" stroke-width="1.5"/><path d="M3.3 3.8 L6 3.8 L7.5 6.2 L9 3.8 L11.7 3.8 L8.9 7.5 L11.7 11.2 L9 11.2 L7.5 8.8 L6 11.2 L3.3 11.2 L6.1 7.5 Z" fill="#70b870" stroke="#3c683c" stroke-width="0.7"/></svg>
<svg class="a" style="left:632px;top:312px" width="30" height="11" viewBox="0 0 30 11"><defs><linearGradient id="pg" x1="0" y1="0" x2="1" y2="0"><stop offset="0" stop-color="#78789c"/><stop offset="0.55" stop-color="#7078b4"/><stop offset="1" stop-color="#6a96f0"/></linearGradient><linearGradient id="ag" x1="0" y1="0" x2="0" y2="1"><stop offset="0" stop-color="#a8a8a8"/><stop offset="1" stop-color="#686868"/></linearGradient></defs><path d="M0.5 3.3 L5 3.3 L5 0.3 L9.5 5 L5 9.8 L5 6.8 L0.5 6.8 Z" fill="url(#ag)" stroke="#5a5a80" stroke-width="0.6"/><path d="M11 1.2 L28 1.2 L20.5 8.8 L11 8.8 Z" fill="url(#pg)" stroke="#5858a0" stroke-width="0.5"/></svg>
<div class="a" style="left:6px;top:326px;width:26px;height:19px;background:linear-gradient(#f6f6f6,#e6e6e6);box-shadow:inset 1px 1px 0 #fff"></div>
<div class="a" style="left:6px;top:325px;width:26px;height:1px;background:#a8a8a8"></div>
<div class="a" style="left:32px;top:325px;width:916px;height:20px;background:#caffca"></div>
<div class="a" style="left:33px;top:325px;width:915px;height:1px;background:#d4d6e0"></div>
<div class="a" style="left:81px;top:326px;width:1px;height:19px;background:#d4d6e0"></div>
<div class="a" style="left:214px;top:326px;width:1px;height:19px;background:#d4d6e0"></div>
<div class="a" style="left:314px;top:326px;width:1px;height:19px;background:#d4d6e0"></div>
<div class="a" style="left:595px;top:326px;width:1px;height:19px;background:#d4d6e0"></div>
<div class="a" style="left:679px;top:326px;width:1px;height:19px;background:#d4d6e0"></div>
<div class="a" style="left:779px;top:326px;width:1px;height:19px;background:#d4d6e0"></div>
<div class="a" style="left:901px;top:326px;width:1px;height:19px;background:#d4d6e0"></div>
<div class="a" style="left:32px;top:325px;width:1px;height:20px;background:#b0b0b0"></div>
<div class="a" style="left:52px;top:330px;width:11px;height:11px;background:#fafafa;border:1px solid #9a9a9a"></div>
<svg class="a" style="left:53px;top:331px" width="9" height="9"><path d="M1.6 4 L4 7.2 L7.8 1.4" fill="none" stroke="#1e64c8" stroke-width="2"/></svg>
<div class="t " style="left:217px;top:329.85999999999996px;color:#000;font-size:11px;transform:scaleX(0.8263);">KUWEV-KUNNR</div>
<div class="t " style="left:317px;top:329.85999999999996px;color:#000;font-size:11px;transform:scaleX(0.9138);">Ship-to&nbsp;party</div>
<div class="t " style="left:682px;top:329.85999999999996px;color:#000;font-size:11px;transform:scaleX(0.8155);">H</div>
<svg class="a" style="left:616px;top:328px" width="15" height="15" viewBox="0 0 15 15"><rect x="0.75" y="0.75" width="13.5" height="13.5" fill="#f6fcf6" stroke="#5c665c" stroke-width="1.5"/><path d="M3.3 3.8 L6 3.8 L7.5 6.2 L9 3.8 L11.7 3.8 L8.9 7.5 L11.7 11.2 L9 11.2 L7.5 8.8 L6 11.2 L3.3 11.2 L6.1 7.5 Z" fill="#70b870" stroke="#3c683c" stroke-width="0.7"/></svg>
<svg class="a" style="left:632px;top:331px" width="30" height="11" viewBox="0 0 30 11"><defs><linearGradient id="pg" x1="0" y1="0" x2="1" y2="0"><stop offset="0" stop-color="#78789c"/><stop offset="0.55" stop-color="#7078b4"/><stop offset="1" stop-color="#6a96f0"/></linearGradient><linearGradient id="ag" x1="0" y1="0" x2="0" y2="1"><stop offset="0" stop-color="#a8a8a8"/><stop offset="1" stop-color="#686868"/></linearGradient></defs><path d="M0.5 3.3 L5 3.3 L5 0.3 L9.5 5 L5 9.8 L5 6.8 L0.5 6.8 Z" fill="url(#ag)" stroke="#5a5a80" stroke-width="0.6"/><path d="M11 1.2 L28 1.2 L20.5 8.8 L11 8.8 Z" fill="url(#pg)" stroke="#5858a0" stroke-width="0.5"/></svg>
<div class="a" style="left:6px;top:346px;width:26px;height:18px;background:linear-gradient(#f6f6f6,#e6e6e6);box-shadow:inset 1px 1px 0 #fff"></div>
<div class="a" style="left:6px;top:345px;width:26px;height:1px;background:#a8a8a8"></div>
<div class="a" style="left:32px;top:345px;width:916px;height:19px;background:#3166c8"></div>
<div class="a" style="left:33px;top:345px;width:915px;height:1px;background:#d4d6e0"></div>
<div class="a" style="left:81px;top:346px;width:1px;height:18px;background:#a4bde6"></div>
<div class="a" style="left:214px;top:346px;width:1px;height:18px;background:#a4bde6"></div>
<div class="a" style="left:314px;top:346px;width:1px;height:18px;background:#a4bde6"></div>
<div class="a" style="left:595px;top:346px;width:1px;height:18px;background:#a4bde6"></div>
<div class="a" style="left:679px;top:346px;width:1px;height:18px;background:#a4bde6"></div>
<div class="a" style="left:779px;top:346px;width:1px;height:18px;background:#a4bde6"></div>
<div class="a" style="left:901px;top:346px;width:1px;height:18px;background:#a4bde6"></div>
<div class="a" style="left:32px;top:345px;width:1px;height:19px;background:#b0b0b0"></div>
<div class="a" style="left:52px;top:350px;width:11px;height:11px;background:#fafafa;border:1px solid #9a9a9a"></div>
<svg class="a" style="left:53px;top:351px" width="9" height="9"><path d="M1.6 4 L4 7.2 L7.8 1.4" fill="none" stroke="#1e64c8" stroke-width="2"/></svg>
<div class="t " style="left:783px;top:349.28px;color:#fff;font-size:11px;transform:scaleX(0.9073);">On&nbsp;Value-Ignore&nbsp;Blank</div>
<div class="t " style="left:905px;top:349.28px;color:#fff;font-size:11px;transform:scaleX(0.8155);">A</div>
<div class="a" style="left:6px;top:365px;width:26px;height:19px;background:linear-gradient(#f6f6f6,#e6e6e6);box-shadow:inset 1px 1px 0 #fff"></div>
<div class="a" style="left:6px;top:364px;width:26px;height:1px;background:#a8a8a8"></div>
<div class="a" style="left:32px;top:364px;width:916px;height:20px;background:#c2c2fd"></div>
<div class="a" style="left:33px;top:364px;width:915px;height:1px;background:#d4d6e0"></div>
<div class="a" style="left:779px;top:364px;width:169px;height:20px;background:#ffc2ff"></div>
<div class="a" style="left:779px;top:364px;width:169px;height:1px;background:#d4d6e0"></div>
<div class="a" style="left:81px;top:365px;width:1px;height:19px;background:#d4d6e0"></div>
<div class="a" style="left:214px;top:365px;width:1px;height:19px;background:#d4d6e0"></div>
<div class="a" style="left:314px;top:365px;width:1px;height:19px;background:#d4d6e0"></div>
<div class="a" style="left:595px;top:365px;width:1px;height:19px;background:#d4d6e0"></div>
<div class="a" style="left:679px;top:365px;width:1px;height:19px;background:#d4d6e0"></div>
<div class="a" style="left:779px;top:365px;width:1px;height:19px;background:#d4d6e0"></div>
<div class="a" style="left:901px;top:365px;width:1px;height:19px;background:#d4d6e0"></div>
<div class="a" style="left:32px;top:364px;width:1px;height:20px;background:#b0b0b0"></div>
<div class="a" style="left:52px;top:369px;width:11px;height:11px;background:#fafafa;border:1px solid #9a9a9a"></div>
<svg class="a" style="left:53px;top:370px" width="9" height="9"><path d="M1.6 4 L4 7.2 L7.8 1.4" fill="none" stroke="#1e64c8" stroke-width="2"/></svg>
<svg class="a" style="left:97px;top:369px" width="16" height="12"><rect x="0" y="0" width="14" height="10.5" fill="#fbfbfb"/><rect x="0" y="0" width="14" height="1.5" fill="#d4d4e0"/><rect x="9.5" y="0" width="4.5" height="1.5" fill="#9898b0"/><rect x="13.5" y="0" width="1.2" height="11" fill="#a0a0b4"/><rect x="0.5" y="10.2" width="14.2" height="1" fill="#a8a8bc"/></svg>
<div class="t " style="left:117px;top:368.7px;color:#000;font-size:11px;transform:scaleX(0.8761);">SAPMV45A&nbsp;-&nbsp;4001</div>
<div class="t " style="left:317px;top:368.7px;color:#000;font-size:11px;transform:scaleX(0.9151);">4.0:&nbsp;Screen&nbsp;Container&nbsp;for&nbsp;Overview&nbsp;Screens&nbsp;(normal&nbsp;header)</div>
<div class="a" style="left:6px;top:385px;width:26px;height:18px;background:linear-gradient(#f6f6f6,#e6e6e6);box-shadow:inset 1px 1px 0 #fff"></div>
<div class="a" style="left:6px;top:384px;width:26px;height:1px;background:#a8a8a8"></div>
<div class="a" style="left:32px;top:384px;width:916px;height:19px;background:#fdca98"></div>
<div class="a" style="left:33px;top:384px;width:915px;height:1px;background:#d4d6e0"></div>
<div class="a" style="left:779px;top:384px;width:169px;height:19px;background:#ffc2ff"></div>
<div class="a" style="left:779px;top:384px;width:169px;height:1px;background:#d4d6e0"></div>
<div class="a" style="left:81px;top:385px;width:1px;height:18px;background:#d4d6e0"></div>
<div class="a" style="left:214px;top:385px;width:1px;height:18px;background:#d4d6e0"></div>
<div class="a" style="left:314px;top:385px;width:1px;height:18px;background:#d4d6e0"></div>
<div class="a" style="left:595px;top:385px;width:1px;height:18px;background:#d4d6e0"></div>
<div class="a" style="left:679px;top:385px;width:1px;height:18px;background:#d4d6e0"></div>
<div class="a" style="left:779px;top:385px;width:1px;height:18px;background:#d4d6e0"></div>
<div class="a" style="left:901px;top:385px;width:1px;height:18px;background:#d4d6e0"></div>
<div class="a" style="left:32px;top:384px;width:1px;height:19px;background:#b0b0b0"></div>
<div class="a" style="left:52px;top:389px;width:11px;height:11px;background:#fafafa;border:1px solid #9a9a9a"></div>
<svg class="a" style="left:53px;top:390px" width="9" height="9"><path d="M1.6 4 L4 7.2 L7.8 1.4" fill="none" stroke="#1e64c8" stroke-width="2"/></svg>
<div class="t " style="left:217px;top:388.12px;color:#000;font-size:11px;transform:scaleX(0.8241);">BDC_OKCODE</div>
<div class="t " style="left:317px;top:388.12px;color:#000;font-size:11px;transform:scaleX(0.9043);">OK&nbsp;Code&nbsp;for&nbsp;this&nbsp;screen</div>
<div class="t " style="left:682px;top:388.12px;color:#000;font-size:11px;transform:scaleX(0.8341);">=POAN</div>
<svg class="a" style="left:616px;top:387px" width="15" height="15" viewBox="0 0 15 15"><path d="M6 9.5 L2 12.8" stroke="#404068" stroke-width="2.4" stroke-linecap="round"/><path d="M5.6 9.9 L2.4 12.5" stroke="#e8e0c8" stroke-width="0.8"/><path d="M6.3 6.8 L10.9 3.6" stroke="#404068" stroke-width="4.4" stroke-linecap="round"/><path d="M6.3 6.8 L10.9 3.6" stroke="#d8c070" stroke-width="2.6"/><circle cx="6.3" cy="6.9" r="2.9" fill="#f0e098" stroke="#404068" stroke-width="0.9"/><circle cx="10.9" cy="3.5" r="2.6" fill="#f2e6b0" stroke="#404068" stroke-width="0.9"/><circle cx="6" cy="6.6" r="1.1" fill="#fff8d8"/><circle cx="10.6" cy="3.2" r="1" fill="#fffae0"/></svg>
<svg class="a" style="left:632px;top:390px" width="30" height="11" viewBox="0 0 30 11"><defs><linearGradient id="pg" x1="0" y1="0" x2="1" y2="0"><stop offset="0" stop-color="#78789c"/><stop offset="0.55" stop-color="#7078b4"/><stop offset="1" stop-color="#6a96f0"/></linearGradient><linearGradient id="ag" x1="0" y1="0" x2="0" y2="1"><stop offset="0" stop-color="#a8a8a8"/><stop offset="1" stop-color="#686868"/></linearGradient></defs><path d="M0.5 3.3 L5 3.3 L5 0.3 L9.5 5 L5 9.8 L5 6.8 L0.5 6.8 Z" fill="url(#ag)" stroke="#5a5a80" stroke-width="0.6"/><path d="M11 1.2 L28 1.2 L20.5 8.8 L11 8.8 Z" fill="url(#pg)" stroke="#5858a0" stroke-width="0.5"/></svg>
<div class="a" style="left:6px;top:404px;width:26px;height:19px;background:linear-gradient(#f6f6f6,#e6e6e6);box-shadow:inset 1px 1px 0 #fff"></div>
<div class="a" style="left:6px;top:403px;width:26px;height:1px;background:#a8a8a8"></div>
<div class="a" style="left:32px;top:403px;width:916px;height:20px;background:#fdca98"></div>
<div class="a" style="left:33px;top:403px;width:915px;height:1px;background:#d4d6e0"></div>
<div class="a" style="left:779px;top:403px;width:169px;height:20px;background:#ffc2ff"></div>
<div class="a" style="left:779px;top:403px;width:169px;height:1px;background:#d4d6e0"></div>
<div class="a" style="left:81px;top:404px;width:1px;height:19px;background:#d4d6e0"></div>
<div class="a" style="left:214px;top:404px;width:1px;height:19px;background:#d4d6e0"></div>
<div class="a" style="left:314px;top:404px;width:1px;height:19px;background:#d4d6e0"></div>
<div class="a" style="left:595px;top:404px;width:1px;height:19px;background:#d4d6e0"></div>
<div class="a" style="left:679px;top:404px;width:1px;height:19px;background:#d4d6e0"></div>
<div class="a" style="left:779px;top:404px;width:1px;height:19px;background:#d4d6e0"></div>
<div class="a" style="left:901px;top:404px;width:1px;height:19px;background:#d4d6e0"></div>
<div class="a" style="left:32px;top:403px;width:1px;height:20px;background:#b0b0b0"></div>
<div class="a" style="left:52px;top:408px;width:11px;height:11px;background:#fafafa;border:1px solid #9a9a9a"></div>
<svg class="a" style="left:53px;top:409px" width="9" height="9"><path d="M1.6 4 L4 7.2 L7.8 1.4" fill="none" stroke="#1e64c8" stroke-width="2"/></svg>
<div class="t " style="left:217px;top:407.53999999999996px;color:#000;font-size:11px;transform:scaleX(0.8241);">BDC_CURSOR</div>
<div class="t " style="left:317px;top:407.53999999999996px;color:#000;font-size:11px;transform:scaleX(0.9152);">Cursor&nbsp;location</div>
<div class="t " style="left:682px;top:407.53999999999996px;color:#000;font-size:11px;transform:scaleX(0.8567);">RV45A-MABNR(02)</div>
<svg class="a" style="left:616px;top:406px" width="15" height="15" viewBox="0 0 15 15"><path d="M6 9.5 L2 12.8" stroke="#404068" stroke-width="2.4" stroke-linecap="round"/><path d="M5.6 9.9 L2.4 12.5" stroke="#e8e0c8" stroke-width="0.8"/><path d="M6.3 6.8 L10.9 3.6" stroke="#404068" stroke-width="4.4" stroke-linecap="round"/><path d="M6.3 6.8 L10.9 3.6" stroke="#d8c070" stroke-width="2.6"/><circle cx="6.3" cy="6.9" r="2.9" fill="#f0e098" stroke="#404068" stroke-width="0.9"/><circle cx="10.9" cy="3.5" r="2.6" fill="#f2e6b0" stroke="#404068" stroke-width="0.9"/><circle cx="6" cy="6.6" r="1.1" fill="#fff8d8"/><circle cx="10.6" cy="3.2" r="1" fill="#fffae0"/></svg>
<svg class="a" style="left:632px;top:409px" width="30" height="11" viewBox="0 0 30 11"><defs><linearGradient id="pg" x1="0" y1="0" x2="1" y2="0"><stop offset="0" stop-color="#78789c"/><stop offset="0.55" stop-color="#7078b4"/><stop offset="1" stop-color="#6a96f0"/></linearGradient><linearGradient id="ag" x1="0" y1="0" x2="0" y2="1"><stop offset="0" stop-color="#a8a8a8"/><stop offset="1" stop-color="#686868"/></linearGradient></defs><path d="M0.5 3.3 L5 3.3 L5 0.3 L9.5 5 L5 9.8 L5 6.8 L0.5 6.8 Z" fill="url(#ag)" stroke="#5a5a80" stroke-width="0.6"/><path d="M11 1.2 L28 1.2 L20.5 8.8 L11 8.8 Z" fill="url(#pg)" stroke="#5858a0" stroke-width="0.5"/></svg>
<div class="a" style="left:6px;top:424px;width:26px;height:18px;background:linear-gradient(#f6f6f6,#e6e6e6);box-shadow:inset 1px 1px 0 #fff"></div>
<div class="a" style="left:6px;top:423px;width:26px;height:1px;background:#a8a8a8"></div>
<div class="a" style="left:32px;top:423px;width:916px;height:19px;background:#c2c2fd"></div>
<div class="a" style="left:33px;top:423px;width:915px;height:1px;background:#d4d6e0"></div>
<div class="a" style="left:779px;top:423px;width:169px;height:19px;background:#ffc2ff"></div>
<div class="a" style="left:779px;top:423px;width:169px;height:1px;background:#d4d6e0"></div>
<div class="a" style="left:81px;top:424px;width:1px;height:18px;background:#d4d6e0"></div>
<div class="a" style="left:214px;top:424px;width:1px;height:18px;background:#d4d6e0"></div>
<div class="a" style="left:314px;top:424px;width:1px;height:18px;background:#d4d6e0"></div>
<div class="a" style="left:595px;top:424px;width:1px;height:18px;background:#d4d6e0"></div>
<div class="a" style="left:679px;top:424px;width:1px;height:18px;background:#d4d6e0"></div>
<div class="a" style="left:779px;top:424px;width:1px;height:18px;background:#d4d6e0"></div>
<div class="a" style="left:901px;top:424px;width:1px;height:18px;background:#d4d6e0"></div>
<div class="a" style="left:32px;top:423px;width:1px;height:19px;background:#b0b0b0"></div>
<div class="a" style="left:52px;top:428px;width:11px;height:11px;background:#fafafa;border:1px solid #9a9a9a"></div>
<svg class="a" style="left:53px;top:429px" width="9" height="9"><path d="M1.6 4 L4 7.2 L7.8 1.4" fill="none" stroke="#1e64c8" stroke-width="2"/></svg>
<svg class="a" style="left:97px;top:428px" width="16" height="12"><rect x="0" y="0" width="14" height="10.5" fill="#fbfbfb"/><rect x="0" y="0" width="14" height="1.5" fill="#d4d4e0"/><rect x="9.5" y="0" width="4.5" height="1.5" fill="#9898b0"/><rect x="13.5" y="0" width="1.2" height="11" fill="#a0a0b4"/><rect x="0.5" y="10.2" width="14.2" height="1" fill="#a8a8bc"/></svg>
<div class="t " style="left:117px;top:426.96px;color:#000;font-size:11px;transform:scaleX(0.8761);">SAPMV45A&nbsp;-&nbsp;4001</div>
<div class="t " style="left:317px;top:426.96px;color:#000;font-size:11px;transform:scaleX(0.9151);">4.0:&nbsp;Screen&nbsp;Container&nbsp;for&nbsp;Overview&nbsp;Screens&nbsp;(normal&nbsp;header)</div>
<div class="a" style="left:6px;top:443px;width:26px;height:18px;background:linear-gradient(#f6f6f6,#e6e6e6);box-shadow:inset 1px 1px 0 #fff"></div>
<div class="a" style="left:6px;top:442px;width:26px;height:1px;background:#a8a8a8"></div>
<div class="a" style="left:32px;top:442px;width:916px;height:19px;background:#fdca98"></div>
<div class="a" style="left:33px;top:442px;width:915px;height:1px;background:#d4d6e0"></div>
<div class="a" style="left:779px;top:442px;width:169px;height:19px;background:#ffc2ff"></div>
<div class="a" style="left:779px;top:442px;width:169px;height:1px;background:#d4d6e0"></div>
<div class="a" style="left:81px;top:443px;width:1px;height:18px;background:#d4d6e0"></div>
<div class="a" style="left:214px;top:443px;width:1px;height:18px;background:#d4d6e0"></div>
<div class="a" style="left:314px;top:443px;width:1px;height:18px;background:#d4d6e0"></div>
<div class="a" style="left:595px;top:443px;width:1px;height:18px;background:#d4d6e0"></div>
<div class="a" style="left:679px;top:443px;width:1px;height:18px;background:#d4d6e0"></div>
<div class="a" style="left:779px;top:443px;width:1px;height:18px;background:#d4d6e0"></div>
<div class="a" style="left:901px;top:443px;width:1px;height:18px;background:#d4d6e0"></div>
<div class="a" style="left:32px;top:442px;width:1px;height:19px;background:#b0b0b0"></div>
<div class="a" style="left:52px;top:447px;width:11px;height:11px;background:#fafafa;border:1px solid #9a9a9a"></div>
<svg class="a" style="left:53px;top:448px" width="9" height="9"><path d="M1.6 4 L4 7.2 L7.8 1.4" fill="none" stroke="#1e64c8" stroke-width="2"/></svg>
<div class="t " style="left:217px;top:446.38px;color:#000;font-size:11px;transform:scaleX(0.8241);">BDC_OKCODE</div>
<div class="t " style="left:317px;top:446.38px;color:#000;font-size:11px;transform:scaleX(0.9043);">OK&nbsp;Code&nbsp;for&nbsp;this&nbsp;screen</div>
<div class="t " style="left:682px;top:446.38px;color:#000;font-size:11px;transform:scaleX(0.9245);">/00</div>
<svg class="a" style="left:616px;top:445px" width="15" height="15" viewBox="0 0 15 15"><path d="M6 9.5 L2 12.8" stroke="#404068" stroke-width="2.4" stroke-linecap="round"/><path d="M5.6 9.9 L2.4 12.5" stroke="#e8e0c8" stroke-width="0.8"/><path d="M6.3 6.8 L10.9 3.6" stroke="#404068" stroke-width="4.4" stroke-linecap="round"/><path d="M6.3 6.8 L10.9 3.6" stroke="#d8c070" stroke-width="2.6"/><circle cx="6.3" cy="6.9" r="2.9" fill="#f0e098" stroke="#404068" stroke-width="0.9"/><circle cx="10.9" cy="3.5" r="2.6" fill="#f2e6b0" stroke="#404068" stroke-width="0.9"/><circle cx="6" cy="6.6" r="1.1" fill="#fff8d8"/><circle cx="10.6" cy="3.2" r="1" fill="#fffae0"/></svg>
<svg class="a" style="left:632px;top:448px" width="30" height="11" viewBox="0 0 30 11"><defs><linearGradient id="pg" x1="0" y1="0" x2="1" y2="0"><stop offset="0" stop-color="#78789c"/><stop offset="0.55" stop-color="#7078b4"/><stop offset="1" stop-color="#6a96f0"/></linearGradient><linearGradient id="ag" x1="0" y1="0" x2="0" y2="1"><stop offset="0" stop-color="#a8a8a8"/><stop offset="1" stop-color="#686868"/></linearGradient></defs><path d="M0.5 3.3 L5 3.3 L5 0.3 L9.5 5 L5 9.8 L5 6.8 L0.5 6.8 Z" fill="url(#ag)" stroke="#5a5a80" stroke-width="0.6"/><path d="M11 1.2 L28 1.2 L20.5 8.8 L11 8.8 Z" fill="url(#pg)" stroke="#5858a0" stroke-width="0.5"/></svg>
<div class="a" style="left:6px;top:462px;width:26px;height:19px;background:linear-gradient(#f6f6f6,#e6e6e6);box-shadow:inset 1px 1px 0 #fff"></div>
<div class="a" style="left:6px;top:461px;width:26px;height:1px;background:#a8a8a8"></div>
<div class="a" style="left:32px;top:461px;width:916px;height:20px;background:#fdca98"></div>
<div class="a" style="left:33px;top:461px;width:915px;height:1px;background:#d4d6e0"></div>
<div class="a" style="left:779px;top:461px;width:169px;height:20px;background:#ffc2ff"></div>
<div class="a" style="left:779px;top:461px;width:169px;height:1px;background:#d4d6e0"></div>
<div class="a" style="left:81px;top:462px;width:1px;height:19px;background:#d4d6e0"></div>
<div class="a" style="left:214px;top:462px;width:1px;height:19px;background:#d4d6e0"></div>
<div class="a" style="left:314px;top:462px;width:1px;height:19px;background:#d4d6e0"></div>
<div class="a" style="left:595px;top:462px;width:1px;height:19px;background:#d4d6e0"></div>
<div class="a" style="left:679px;top:462px;width:1px;height:19px;background:#d4d6e0"></div>
<div class="a" style="left:779px;top:462px;width:1px;height:19px;background:#d4d6e0"></div>
<div class="a" style="left:901px;top:462px;width:1px;height:19px;background:#d4d6e0"></div>
<div class="a" style="left:32px;top:461px;width:1px;height:20px;background:#b0b0b0"></div>
<div class="a" style="left:52px;top:466px;width:11px;height:11px;background:#fafafa;border:1px solid #9a9a9a"></div>
<svg class="a" style="left:53px;top:467px" width="9" height="9"><path d="M1.6 4 L4 7.2 L7.8 1.4" fill="none" stroke="#1e64c8" stroke-width="2"/></svg>
<div class="t " style="left:217px;top:465.79999999999995px;color:#000;font-size:11px;transform:scaleX(0.8241);">BDC_CURSOR</div>
<div class="t " style="left:317px;top:465.79999999999995px;color:#000;font-size:11px;transform:scaleX(0.9152);">Cursor&nbsp;location</div>
<div class="t " style="left:682px;top:465.79999999999995px;color:#000;font-size:11px;transform:scaleX(0.8526);">RV45A-KWMENG(02)</div>
<svg class="a" style="left:616px;top:464px" width="15" height="15" viewBox="0 0 15 15"><path d="M6 9.5 L2 12.8" stroke="#404068" stroke-width="2.4" stroke-linecap="round"/><path d="M5.6 9.9 L2.4 12.5" stroke="#e8e0c8" stroke-width="0.8"/><path d="M6.3 6.8 L10.9 3.6" stroke="#404068" stroke-width="4.4" stroke-linecap="round"/><path d="M6.3 6.8 L10.9 3.6" stroke="#d8c070" stroke-width="2.6"/><circle cx="6.3" cy="6.9" r="2.9" fill="#f0e098" stroke="#404068" stroke-width="0.9"/><circle cx="10.9" cy="3.5" r="2.6" fill="#f2e6b0" stroke="#404068" stroke-width="0.9"/><circle cx="6" cy="6.6" r="1.1" fill="#fff8d8"/><circle cx="10.6" cy="3.2" r="1" fill="#fffae0"/></svg>
<svg class="a" style="left:632px;top:467px" width="30" height="11" viewBox="0 0 30 11"><defs><linearGradient id="pg" x1="0" y1="0" x2="1" y2="0"><stop offset="0" stop-color="#78789c"/><stop offset="0.55" stop-color="#7078b4"/><stop offset="1" stop-color="#6a96f0"/></linearGradient><linearGradient id="ag" x1="0" y1="0" x2="0" y2="1"><stop offset="0" stop-color="#a8a8a8"/><stop offset="1" stop-color="#686868"/></linearGradient></defs><path d="M0.5 3.3 L5 3.3 L5 0.3 L9.5 5 L5 9.8 L5 6.8 L0.5 6.8 Z" fill="url(#ag)" stroke="#5a5a80" stroke-width="0.6"/><path d="M11 1.2 L28 1.2 L20.5 8.8 L11 8.8 Z" fill="url(#pg)" stroke="#5858a0" stroke-width="0.5"/></svg>
<div class="a" style="left:6px;top:482px;width:26px;height:18px;background:linear-gradient(#f6f6f6,#e6e6e6);box-shadow:inset 1px 1px 0 #fff"></div>
<div class="a" style="left:6px;top:481px;width:26px;height:1px;background:#a8a8a8"></div>
<div class="a" style="left:32px;top:481px;width:916px;height:19px;background:#caffca"></div>
<div class="a" style="left:33px;top:481px;width:915px;height:1px;background:#d4d6e0"></div>
<div class="a" style="left:779px;top:481px;width:169px;height:19px;background:#ffc2ff"></div>
<div class="a" style="left:779px;top:481px;width:169px;height:1px;background:#d4d6e0"></div>
<div class="a" style="left:81px;top:482px;width:1px;height:18px;background:#d4d6e0"></div>
<div class="a" style="left:214px;top:482px;width:1px;height:18px;background:#d4d6e0"></div>
<div class="a" style="left:314px;top:482px;width:1px;height:18px;background:#d4d6e0"></div>
<div class="a" style="left:595px;top:482px;width:1px;height:18px;background:#d4d6e0"></div>
<div class="a" style="left:679px;top:482px;width:1px;height:18px;background:#d4d6e0"></div>
<div class="a" style="left:779px;top:482px;width:1px;height:18px;background:#d4d6e0"></div>
<div class="a" style="left:901px;top:482px;width:1px;height:18px;background:#d4d6e0"></div>
<div class="a" style="left:32px;top:481px;width:1px;height:19px;background:#b0b0b0"></div>
<div class="a" style="left:52px;top:486px;width:11px;height:11px;background:#fafafa;border:1px solid #9a9a9a"></div>
<svg class="a" style="left:53px;top:487px" width="9" height="9"><path d="M1.6 4 L4 7.2 L7.8 1.4" fill="none" stroke="#1e64c8" stroke-width="2"/></svg>
<div class="t " style="left:217px;top:485.21999999999997px;color:#000;font-size:11px;transform:scaleX(0.8567);">RV45A-MABNR(02)</div>
<div class="t " style="left:317px;top:485.21999999999997px;color:#000;font-size:11px;transform:scaleX(0.9036);">Material&nbsp;Number</div>
<div class="t " style="left:682px;top:485.21999999999997px;color:#000;font-size:11px;transform:scaleX(0.8155);">I</div>
<svg class="a" style="left:616px;top:484px" width="15" height="15" viewBox="0 0 15 15"><rect x="0.75" y="0.75" width="13.5" height="13.5" fill="#f6fcf6" stroke="#5c665c" stroke-width="1.5"/><path d="M3.3 3.8 L6 3.8 L7.5 6.2 L9 3.8 L11.7 3.8 L8.9 7.5 L11.7 11.2 L9 11.2 L7.5 8.8 L6 11.2 L3.3 11.2 L6.1 7.5 Z" fill="#70b870" stroke="#3c683c" stroke-width="0.7"/></svg>
<svg class="a" style="left:632px;top:487px" width="30" height="11" viewBox="0 0 30 11"><defs><linearGradient id="pg" x1="0" y1="0" x2="1" y2="0"><stop offset="0" stop-color="#78789c"/><stop offset="0.55" stop-color="#7078b4"/><stop offset="1" stop-color="#6a96f0"/></linearGradient><linearGradient id="ag" x1="0" y1="0" x2="0" y2="1"><stop offset="0" stop-color="#a8a8a8"/><stop offset="1" stop-color="#686868"/></linearGradient></defs><path d="M0.5 3.3 L5 3.3 L5 0.3 L9.5 5 L5 9.8 L5 6.8 L0.5 6.8 Z" fill="url(#ag)" stroke="#5a5a80" stroke-width="0.6"/><path d="M11 1.2 L28 1.2 L20.5 8.8 L11 8.8 Z" fill="url(#pg)" stroke="#5858a0" stroke-width="0.5"/></svg>
<div class="t " style="left:783px;top:485.21999999999997px;color:#000;font-size:11px;transform:scaleX(0.9058);">Header&nbsp;+Line&nbsp;Item</div>
<div class="a" style="left:6px;top:501px;width:26px;height:19px;background:linear-gradient(#f6f6f6,#e6e6e6);box-shadow:inset 1px 1px 0 #fff"></div>
<div class="a" style="left:6px;top:500px;width:26px;height:1px;background:#a8a8a8"></div>
<div class="a" style="left:32px;top:500px;width:916px;height:20px;background:#caffca"></div>
<div class="a" style="left:33px;top:500px;width:915px;height:1px;background:#d4d6e0"></div>
<div class="a" style="left:779px;top:500px;width:169px;height:20px;background:#ffc2ff"></div>
<div class="a" style="left:779px;top:500px;width:169px;height:1px;background:#d4d6e0"></div>
<div class="a" style="left:81px;top:501px;width:1px;height:19px;background:#d4d6e0"></div>
<div class="a" style="left:214px;top:501px;width:1px;height:19px;background:#d4d6e0"></div>
<div class="a" style="left:314px;top:501px;width:1px;height:19px;background:#d4d6e0"></div>
<div class="a" style="left:595px;top:501px;width:1px;height:19px;background:#d4d6e0"></div>
<div class="a" style="left:679px;top:501px;width:1px;height:19px;background:#d4d6e0"></div>
<div class="a" style="left:779px;top:501px;width:1px;height:19px;background:#d4d6e0"></div>
<div class="a" style="left:901px;top:501px;width:1px;height:19px;background:#d4d6e0"></div>
<div class="a" style="left:32px;top:500px;width:1px;height:20px;background:#b0b0b0"></div>
<div class="a" style="left:52px;top:505px;width:11px;height:11px;background:#fafafa;border:1px solid #9a9a9a"></div>
<svg class="a" style="left:53px;top:506px" width="9" height="9"><path d="M1.6 4 L4 7.2 L7.8 1.4" fill="none" stroke="#1e64c8" stroke-width="2"/></svg>
<div class="t " style="left:217px;top:504.64px;color:#000;font-size:11px;transform:scaleX(0.8526);">RV45A-KWMENG(02)</div>
<div class="t " style="left:317px;top:504.64px;color:#000;font-size:11px;transform:scaleX(0.9046);">Cumulative&nbsp;Order&nbsp;Quantity&nbsp;in&nbsp;Sales&nbsp;Units</div>
<div class="t " style="left:682px;top:504.64px;color:#000;font-size:11px;transform:scaleX(0.8155);">J</div>
<svg class="a" style="left:616px;top:503px" width="15" height="15" viewBox="0 0 15 15"><rect x="0.75" y="0.75" width="13.5" height="13.5" fill="#f6fcf6" stroke="#5c665c" stroke-width="1.5"/><path d="M3.3 3.8 L6 3.8 L7.5 6.2 L9 3.8 L11.7 3.8 L8.9 7.5 L11.7 11.2 L9 11.2 L7.5 8.8 L6 11.2 L3.3 11.2 L6.1 7.5 Z" fill="#70b870" stroke="#3c683c" stroke-width="0.7"/></svg>
<svg class="a" style="left:632px;top:506px" width="30" height="11" viewBox="0 0 30 11"><defs><linearGradient id="pg" x1="0" y1="0" x2="1" y2="0"><stop offset="0" stop-color="#78789c"/><stop offset="0.55" stop-color="#7078b4"/><stop offset="1" stop-color="#6a96f0"/></linearGradient><linearGradient id="ag" x1="0" y1="0" x2="0" y2="1"><stop offset="0" stop-color="#a8a8a8"/><stop offset="1" stop-color="#686868"/></linearGradient></defs><path d="M0.5 3.3 L5 3.3 L5 0.3 L9.5 5 L5 9.8 L5 6.8 L0.5 6.8 Z" fill="url(#ag)" stroke="#5a5a80" stroke-width="0.6"/><path d="M11 1.2 L28 1.2 L20.5 8.8 L11 8.8 Z" fill="url(#pg)" stroke="#5858a0" stroke-width="0.5"/></svg>
<div class="t " style="left:783px;top:504.64px;color:#000;font-size:11px;transform:scaleX(0.9058);">Header&nbsp;+Line&nbsp;Item</div>
<div class="a" style="left:6px;top:521px;width:26px;height:18px;background:linear-gradient(#f6f6f6,#e6e6e6);box-shadow:inset 1px 1px 0 #fff"></div>
<div class="a" style="left:6px;top:520px;width:26px;height:1px;background:#a8a8a8"></div>
<div class="a" style="left:32px;top:520px;width:916px;height:19px;background:#ffc2ff"></div>
<div class="a" style="left:33px;top:520px;width:915px;height:1px;background:#d4d6e0"></div>
<div class="a" style="left:81px;top:521px;width:1px;height:18px;background:#d4d6e0"></div>
<div class="a" style="left:214px;top:521px;width:1px;height:18px;background:#d4d6e0"></div>
<div class="a" style="left:314px;top:521px;width:1px;height:18px;background:#d4d6e0"></div>
<div class="a" style="left:595px;top:521px;width:1px;height:18px;background:#d4d6e0"></div>
<div class="a" style="left:679px;top:521px;width:1px;height:18px;background:#d4d6e0"></div>
<div class="a" style="left:779px;top:521px;width:1px;height:18px;background:#d4d6e0"></div>
<div class="a" style="left:901px;top:521px;width:1px;height:18px;background:#d4d6e0"></div>
<div class="a" style="left:32px;top:520px;width:1px;height:19px;background:#b0b0b0"></div>
<div class="a" style="left:52px;top:525px;width:11px;height:11px;background:#fafafa;border:1px solid #9a9a9a"></div>
<svg class="a" style="left:53px;top:526px" width="9" height="9"><path d="M1.6 4 L4 7.2 L7.8 1.4" fill="none" stroke="#1e64c8" stroke-width="2"/></svg>
<div class="t " style="left:117px;top:524.06px;color:#000;font-size:11px;transform:scaleX(0.8952);">End&nbsp;Loop</div>
<svg class="a" style="left:83px;top:522px" width="31" height="16" viewBox="0 0 31 16"><path d="M3.2 5.5 L0.5 5.5 L5.5 1 L10.5 5.5 L8 5.5 L8 11 L29 11 L29 15.5 L3.2 15.5 Z" fill="#a0bcf8" stroke="#6a86e0" stroke-width="0.9"/><path d="M0.8 5.5 L5.5 1 L10.2 5.5 Z" fill="#8898f0"/><path d="M1 5.2 L5.5 1 L10 5.2" fill="none" stroke="#202030" stroke-width="1.3"/></svg>
<div class="a" style="left:6px;top:540px;width:26px;height:18px;background:linear-gradient(#f6f6f6,#e6e6e6);box-shadow:inset 1px 1px 0 #fff"></div>
<div class="a" style="left:6px;top:539px;width:26px;height:1px;background:#a8a8a8"></div>
<div class="a" style="left:32px;top:539px;width:916px;height:19px;background:#c2c2fd"></div>
<div class="a" style="left:33px;top:539px;width:915px;height:1px;background:#d4d6e0"></div>
<div class="a" style="left:81px;top:540px;width:1px;height:18px;background:#d4d6e0"></div>
<div class="a" style="left:214px;top:540px;width:1px;height:18px;background:#d4d6e0"></div>
<div class="a" style="left:314px;top:540px;width:1px;height:18px;background:#d4d6e0"></div>
<div class="a" style="left:595px;top:540px;width:1px;height:18px;background:#d4d6e0"></div>
<div class="a" style="left:679px;top:540px;width:1px;height:18px;background:#d4d6e0"></div>
<div class="a" style="left:779px;top:540px;width:1px;height:18px;background:#d4d6e0"></div>
<div class="a" style="left:901px;top:540px;width:1px;height:18px;background:#d4d6e0"></div>
<div class="a" style="left:32px;top:539px;width:1px;height:19px;background:#b0b0b0"></div>
<div class="a" style="left:52px;top:544px;width:11px;height:11px;background:#fafafa;border:1px solid #9a9a9a"></div>
<svg class="a" style="left:53px;top:545px" width="9" height="9"><path d="M1.6 4 L4 7.2 L7.8 1.4" fill="none" stroke="#1e64c8" stroke-width="2"/></svg>
<svg class="a" style="left:97px;top:544px" width="16" height="12"><rect x="0" y="0" width="14" height="10.5" fill="#fbfbfb"/><rect x="0" y="0" width="14" height="1.5" fill="#d4d4e0"/><rect x="9.5" y="0" width="4.5" height="1.5" fill="#9898b0"/><rect x="13.5" y="0" width="1.2" height="11" fill="#a0a0b4"/><rect x="0.5" y="10.2" width="14.2" height="1" fill="#a8a8bc"/></svg>
<div class="t " style="left:117px;top:543.48px;color:#000;font-size:11px;transform:scaleX(0.8761);">SAPMV45A&nbsp;-&nbsp;4001</div>
<div class="t " style="left:317px;top:543.48px;color:#000;font-size:11px;transform:scaleX(0.9151);">4.0:&nbsp;Screen&nbsp;Container&nbsp;for&nbsp;Overview&nbsp;Screens&nbsp;(normal&nbsp;header)</div>
<div class="a" style="left:6px;top:559px;width:26px;height:19px;background:linear-gradient(#f6f6f6,#e6e6e6);box-shadow:inset 1px 1px 0 #fff"></div>
<div class="a" style="left:6px;top:558px;width:26px;height:1px;background:#a8a8a8"></div>
<div class="a" style="left:32px;top:558px;width:916px;height:20px;background:#fdca98"></div>
<div class="a" style="left:33px;top:558px;width:915px;height:1px;background:#d4d6e0"></div>
<div class="a" style="left:81px;top:559px;width:1px;height:19px;background:#d4d6e0"></div>
<div class="a" style="left:214px;top:559px;width:1px;height:19px;background:#d4d6e0"></div>
<div class="a" style="left:314px;top:559px;width:1px;height:19px;background:#d4d6e0"></div>
<div class="a" style="left:595px;top:559px;width:1px;height:19px;background:#d4d6e0"></div>
<div class="a" style="left:679px;top:559px;width:1px;height:19px;background:#d4d6e0"></div>
<div class="a" style="left:779px;top:559px;width:1px;height:19px;background:#d4d6e0"></div>
<div class="a" style="left:901px;top:559px;width:1px;height:19px;background:#d4d6e0"></div>
<div class="a" style="left:32px;top:558px;width:1px;height:20px;background:#b0b0b0"></div>
<div class="a" style="left:52px;top:563px;width:11px;height:11px;background:#fafafa;border:1px solid #9a9a9a"></div>
<svg class="a" style="left:53px;top:564px" width="9" height="9"><path d="M1.6 4 L4 7.2 L7.8 1.4" fill="none" stroke="#1e64c8" stroke-width="2"/></svg>
<div class="t " style="left:217px;top:562.9px;color:#000;font-size:11px;transform:scaleX(0.8241);">BDC_OKCODE</div>
<div class="t " style="left:317px;top:562.9px;color:#000;font-size:11px;transform:scaleX(0.9043);">OK&nbsp;Code&nbsp;for&nbsp;this&nbsp;screen</div>
<div class="t " style="left:682px;top:562.9px;color:#000;font-size:11px;transform:scaleX(0.8369);">=SICH</div>
<svg class="a" style="left:616px;top:561px" width="15" height="15" viewBox="0 0 15 15"><path d="M6 9.5 L2 12.8" stroke="#404068" stroke-width="2.4" stroke-linecap="round"/><path d="M5.6 9.9 L2.4 12.5" stroke="#e8e0c8" stroke-width="0.8"/><path d="M6.3 6.8 L10.9 3.6" stroke="#404068" stroke-width="4.4" stroke-linecap="round"/><path d="M6.3 6.8 L10.9 3.6" stroke="#d8c070" stroke-width="2.6"/><circle cx="6.3" cy="6.9" r="2.9" fill="#f0e098" stroke="#404068" stroke-width="0.9"/><circle cx="10.9" cy="3.5" r="2.6" fill="#f2e6b0" stroke="#404068" stroke-width="0.9"/><circle cx="6" cy="6.6" r="1.1" fill="#fff8d8"/><circle cx="10.6" cy="3.2" r="1" fill="#fffae0"/></svg>
<svg class="a" style="left:632px;top:564px" width="30" height="11" viewBox="0 0 30 11"><defs><linearGradient id="pg" x1="0" y1="0" x2="1" y2="0"><stop offset="0" stop-color="#78789c"/><stop offset="0.55" stop-color="#7078b4"/><stop offset="1" stop-color="#6a96f0"/></linearGradient><linearGradient id="ag" x1="0" y1="0" x2="0" y2="1"><stop offset="0" stop-color="#a8a8a8"/><stop offset="1" stop-color="#686868"/></linearGradient></defs><path d="M0.5 3.3 L5 3.3 L5 0.3 L9.5 5 L5 9.8 L5 6.8 L0.5 6.8 Z" fill="url(#ag)" stroke="#5a5a80" stroke-width="0.6"/><path d="M11 1.2 L28 1.2 L20.5 8.8 L11 8.8 Z" fill="url(#pg)" stroke="#5858a0" stroke-width="0.5"/></svg>
<div class="a" style="left:6px;top:579px;width:26px;height:18px;background:linear-gradient(#f6f6f6,#e6e6e6);box-shadow:inset 1px 1px 0 #fff"></div>
<div class="a" style="left:6px;top:578px;width:26px;height:1px;background:#a8a8a8"></div>
<div class="a" style="left:32px;top:578px;width:916px;height:19px;background:#fdca98"></div>
<div class="a" style="left:33px;top:578px;width:915px;height:1px;background:#d4d6e0"></div>
<div class="a" style="left:81px;top:579px;width:1px;height:18px;background:#d4d6e0"></div>
<div class="a" style="left:214px;top:579px;width:1px;height:18px;background:#d4d6e0"></div>
<div class="a" style="left:314px;top:579px;width:1px;height:18px;background:#d4d6e0"></div>
<div class="a" style="left:595px;top:579px;width:1px;height:18px;background:#d4d6e0"></div>
<div class="a" style="left:679px;top:579px;width:1px;height:18px;background:#d4d6e0"></div>
<div class="a" style="left:779px;top:579px;width:1px;height:18px;background:#d4d6e0"></div>
<div class="a" style="left:901px;top:579px;width:1px;height:18px;background:#d4d6e0"></div>
<div class="a" style="left:32px;top:578px;width:1px;height:19px;background:#b0b0b0"></div>
<div class="a" style="left:52px;top:583px;width:11px;height:11px;background:#fafafa;border:1px solid #9a9a9a"></div>
<svg class="a" style="left:53px;top:584px" width="9" height="9"><path d="M1.6 4 L4 7.2 L7.8 1.4" fill="none" stroke="#1e64c8" stroke-width="2"/></svg>
<div class="t " style="left:217px;top:582.3199999999999px;color:#000;font-size:11px;transform:scaleX(0.8241);">BDC_CURSOR</div>
<div class="t " style="left:317px;top:582.3199999999999px;color:#000;font-size:11px;transform:scaleX(0.9152);">Cursor&nbsp;location</div>
<div class="t " style="left:682px;top:582.3199999999999px;color:#000;font-size:11px;transform:scaleX(0.8567);">RV45A-MABNR(02)</div>
<svg class="a" style="left:616px;top:581px" width="15" height="15" viewBox="0 0 15 15"><path d="M6 9.5 L2 12.8" stroke="#404068" stroke-width="2.4" stroke-linecap="round"/><path d="M5.6 9.9 L2.4 12.5" stroke="#e8e0c8" stroke-width="0.8"/><path d="M6.3 6.8 L10.9 3.6" stroke="#404068" stroke-width="4.4" stroke-linecap="round"/><path d="M6.3 6.8 L10.9 3.6" stroke="#d8c070" stroke-width="2.6"/><circle cx="6.3" cy="6.9" r="2.9" fill="#f0e098" stroke="#404068" stroke-width="0.9"/><circle cx="10.9" cy="3.5" r="2.6" fill="#f2e6b0" stroke="#404068" stroke-width="0.9"/><circle cx="6" cy="6.6" r="1.1" fill="#fff8d8"/><circle cx="10.6" cy="3.2" r="1" fill="#fffae0"/></svg>
<svg class="a" style="left:632px;top:584px" width="30" height="11" viewBox="0 0 30 11"><defs><linearGradient id="pg" x1="0" y1="0" x2="1" y2="0"><stop offset="0" stop-color="#78789c"/><stop offset="0.55" stop-color="#7078b4"/><stop offset="1" stop-color="#6a96f0"/></linearGradient><linearGradient id="ag" x1="0" y1="0" x2="0" y2="1"><stop offset="0" stop-color="#a8a8a8"/><stop offset="1" stop-color="#686868"/></linearGradient></defs><path d="M0.5 3.3 L5 3.3 L5 0.3 L9.5 5 L5 9.8 L5 6.8 L0.5 6.8 Z" fill="url(#ag)" stroke="#5a5a80" stroke-width="0.6"/><path d="M11 1.2 L28 1.2 L20.5 8.8 L11 8.8 Z" fill="url(#pg)" stroke="#5858a0" stroke-width="0.5"/></svg>
<div class="a" style="left:81px;top:346px;width:133px;height:19px;background:#fff;border:1px dotted #222"></div>
<div class="t " style="left:117px;top:349.28px;color:#000;font-size:11px;transform:scaleX(0.8975);">Start&nbsp;Loop</div>
<svg class="a" style="left:83px;top:347px" width="31" height="16" viewBox="0 0 31 16"><path d="M3.2 2 L29 2 L29 6.5 L8 6.5 L8 10.5 L10.5 10.5 L5.5 15 L0.5 10.5 L3.2 10.5 Z" fill="#a0bcf8" stroke="#6a86e0" stroke-width="0.9"/><path d="M0.8 10.5 L5.5 15 L10.2 10.5 Z" fill="#8898f0"/><path d="M1 10.8 L5.5 15 L10 10.8" fill="none" stroke="#202030" stroke-width="1.3"/></svg>
<svg class="a" style="left:204px;top:353px" width="6" height="4"><path d="M0.5 0.5 L5.5 0.5 L3 3.5 Z" fill="#202020"/></svg>
<svg class="a" style="left:9px;top:349px" width="10" height="12" viewBox="0 0 10 12"><path d="M1.5 10.5 L2 7.5 L6.5 1.5 Q7.5 0.8 8.3 1.5 Q9 2.3 8.3 3.2 L3.8 9.5 L1.5 10.5" fill="#fff" stroke="#222" stroke-width="1.2"/><rect x="5" y="9.5" width="1.3" height="1.3" fill="#222"/><rect x="7.2" y="9.5" width="1.3" height="1.3" fill="#222"/></svg>
<div class="a" style="left:948px;top:1px;width:1px;height:595px;background:#e4e8f4"></div>
<div class="a" style="left:0;top:0;width:950px;height:597px;border:1px solid #525252"></div>
</body></html>
